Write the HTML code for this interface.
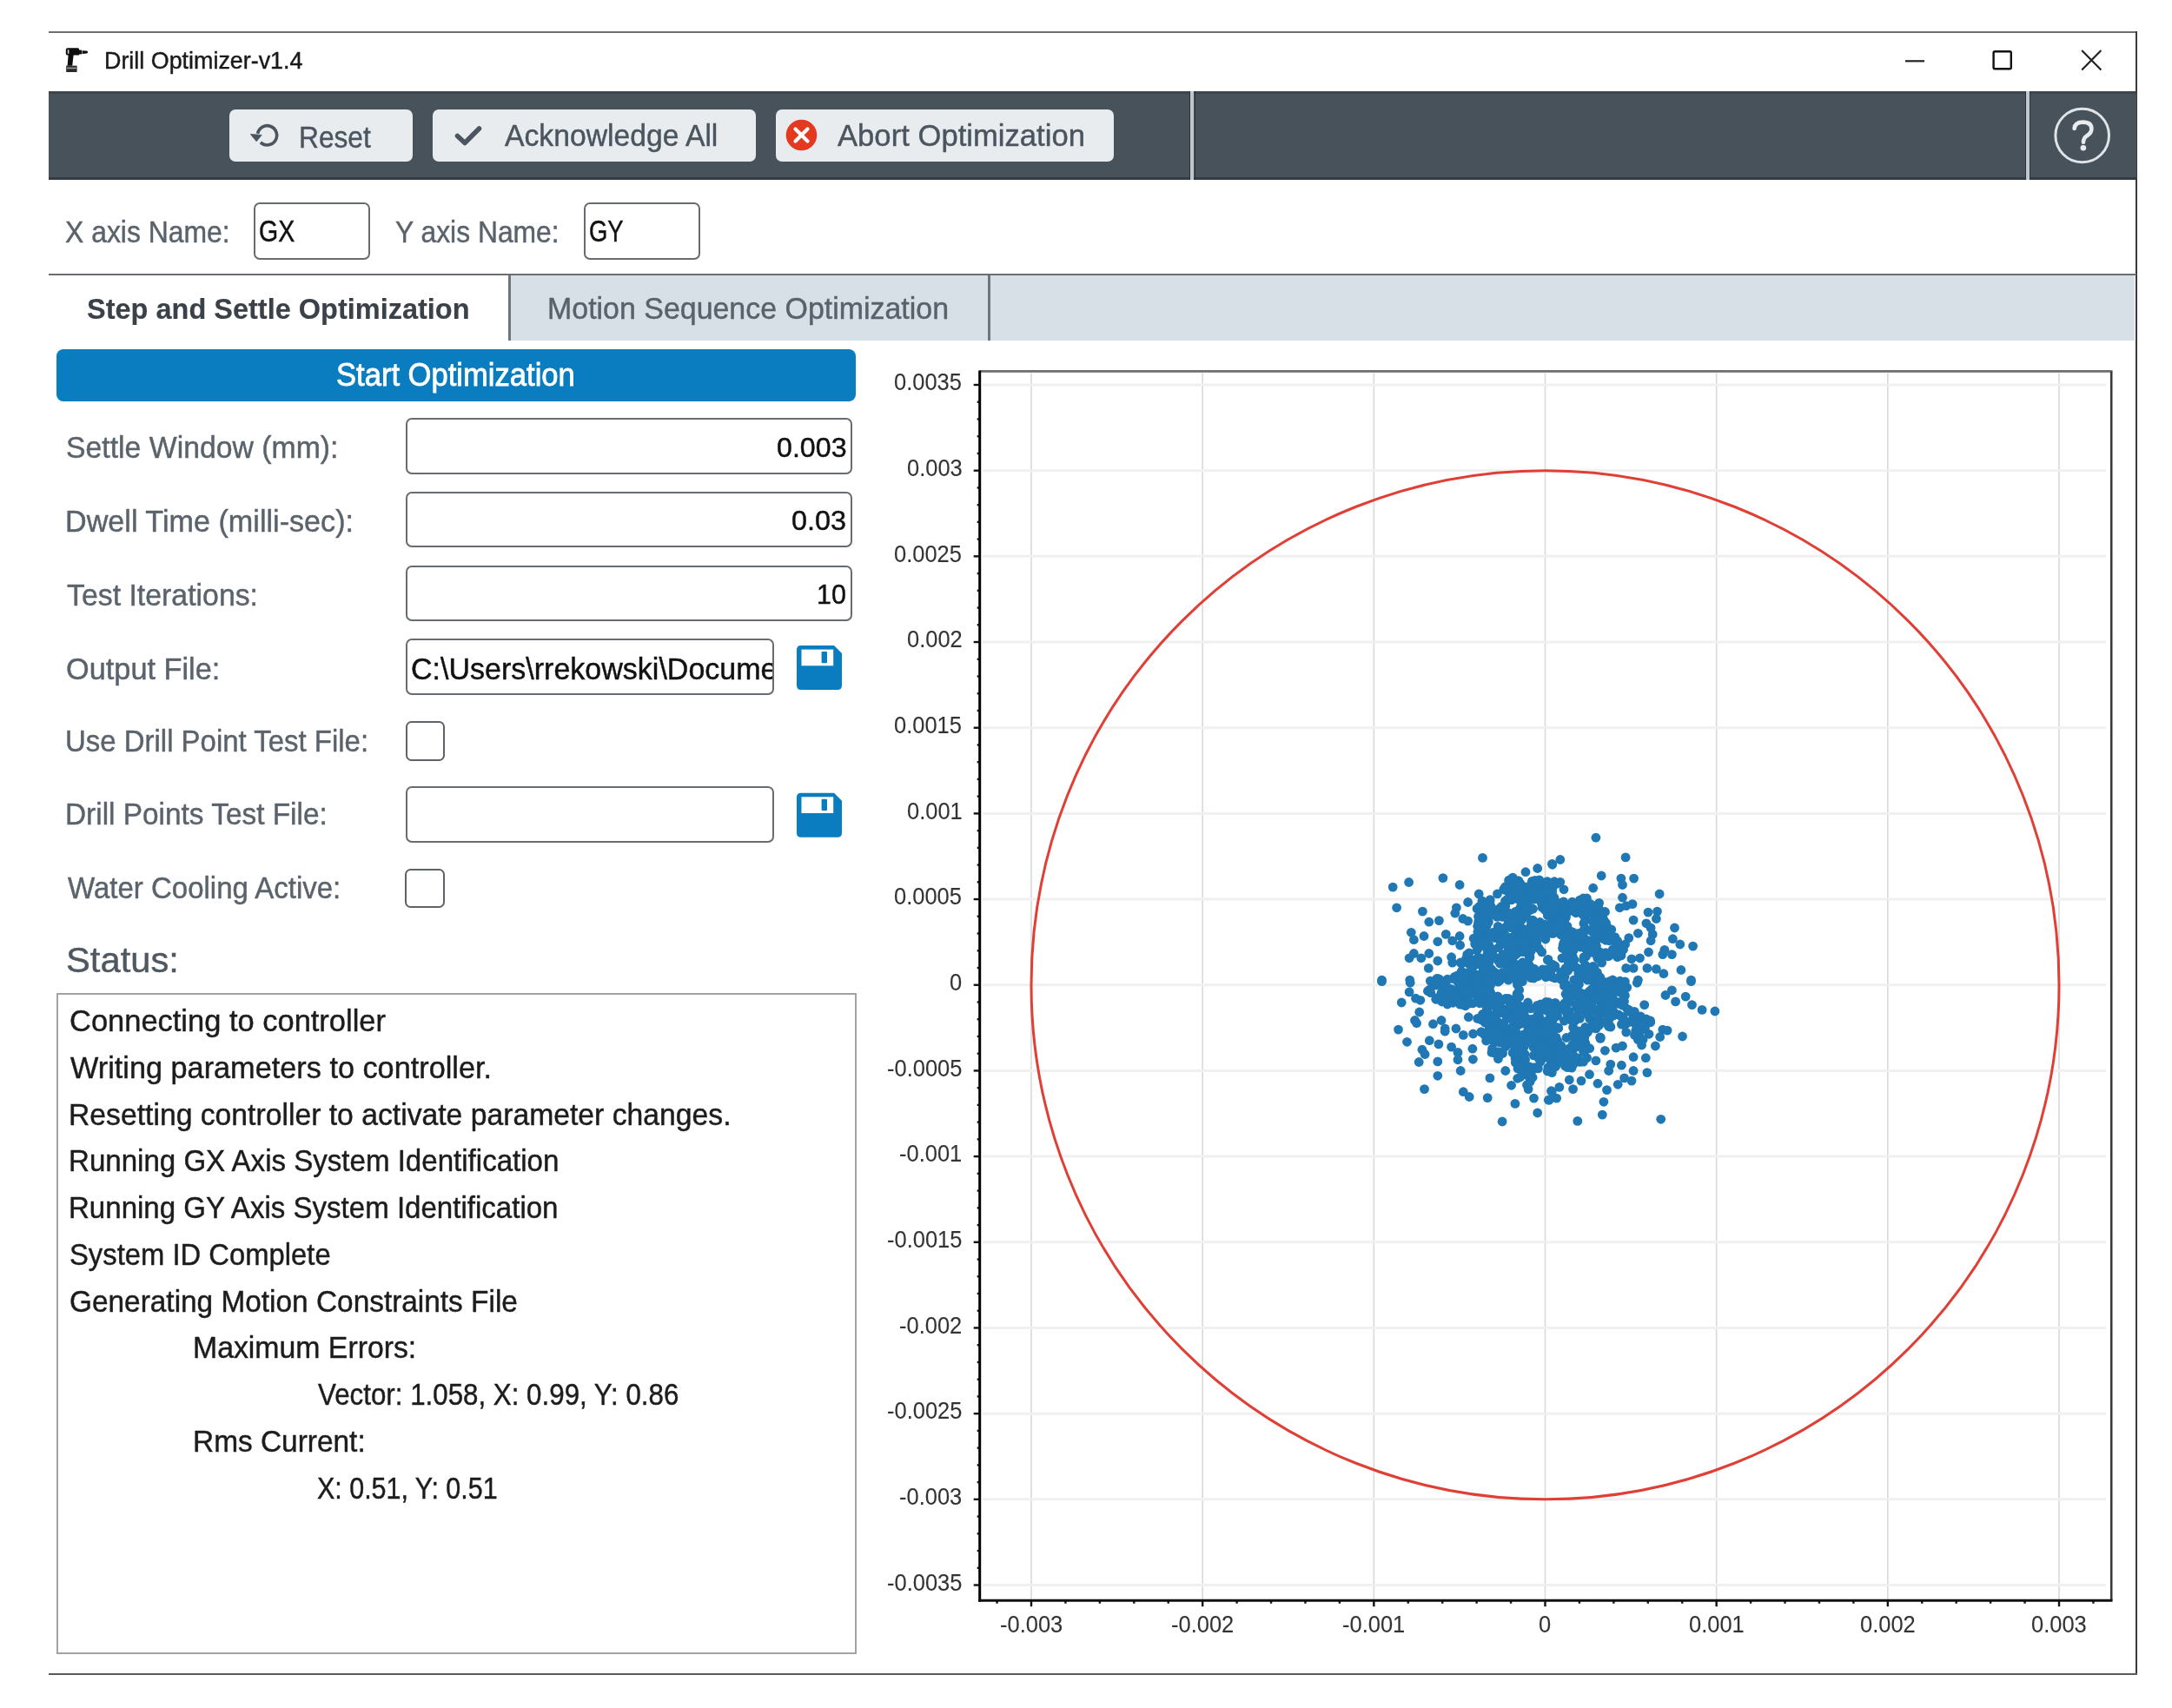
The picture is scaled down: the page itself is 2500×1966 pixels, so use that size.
<!DOCTYPE html><html><head><meta charset="utf-8"><style>
html,body{margin:0;padding:0}
body{width:2500px;height:1966px;background:#fff;position:relative;overflow:hidden;font-family:"Liberation Sans",sans-serif}
.a{position:absolute}
.t{position:absolute;white-space:pre;transform-origin:0 0;line-height:1;-webkit-text-stroke:0.45px currentColor}
svg{position:absolute;left:0;top:0}
#wrap{position:absolute;left:0;top:0;width:2500px;height:1966px;overflow:hidden;filter:blur(0.5px)}
</style></head><body><div id="wrap">
<div class="a" style="left:56.00px;top:36.00px;width:2404.00px;height:2.00px;background:#707070;"></div>
<div class="a" style="left:2458.30px;top:36.00px;width:2.00px;height:1892.00px;background:#3a3a3a;"></div>
<div class="a" style="left:56.00px;top:1926.20px;width:2404.00px;height:2.20px;background:#5a5a5a;"></div>
<svg width="2500" height="120" viewBox="0 0 2500 120" style="left:0;top:0">
<path d="M75.8 57.5 Q75.8 55.2 78 55.2 L89.5 55.2 Q91.2 55.2 91.2 57 L91.2 63.6 L84.6 63.6 L83.2 75.8 L77.6 75.8 L78.6 63.6 L78 63.6 Q75.8 63.6 75.8 61.4 Z" fill="#0d0d0d"/>
<rect x="77.8" y="57.2" width="1.6" height="4.6" fill="#d8d8d8"/>
<rect x="91" y="57.6" width="3" height="4.8" fill="#111"/>
<path d="M94.5 58.2 L100 58.6 Q102.4 60 100 61.6 L94.5 62 Z" fill="#111"/>
<rect x="76.2" y="75.6" width="12.4" height="7.4" fill="#2a2a2a"/>
<rect x="77" y="77.6" width="10.8" height="1.6" fill="#9a9a9a"/>
<line x1="2193" y1="70.3" x2="2215" y2="70.3" stroke="#222" stroke-width="2.2"/>
<rect x="2294.6" y="59.3" width="20.2" height="20" rx="1.5" fill="none" stroke="#111" stroke-width="2.4"/>
<path d="M2396.2 58 L2418.4 80.4 M2418.4 58 L2396.2 80.4" stroke="#222" stroke-width="2.2"/>
</svg>
<div class="t" style="left:119.65px;top:56.12px;font-size:27.97px;color:#1a1a1a;transform:scaleX(0.9609);">Drill Optimizer-v1.4</div>
<div class="a" style="left:56.00px;top:104.70px;width:2403.00px;height:102.10px;background:#48525b;"></div>
<div class="a" style="left:56.00px;top:104.70px;width:2403.00px;height:2.90px;background:#3e464e;"></div>
<div class="a" style="left:56.00px;top:204.00px;width:2403.00px;height:2.80px;background:#333b43;"></div>
<div class="a" style="left:1369.20px;top:104.70px;width:1.20px;height:102.10px;background:#2c333a;"></div>
<div class="a" style="left:1370.40px;top:104.70px;width:4.10px;height:102.10px;background:#c0c8ce;"></div>
<div class="a" style="left:1374.50px;top:104.70px;width:1.20px;height:102.10px;background:#2c333a;"></div>
<div class="a" style="left:2331.00px;top:104.70px;width:1.20px;height:102.10px;background:#2c333a;"></div>
<div class="a" style="left:2332.20px;top:104.70px;width:4.10px;height:102.10px;background:#c0c8ce;"></div>
<div class="a" style="left:2336.30px;top:104.70px;width:1.20px;height:102.10px;background:#2c333a;"></div>
<div class="a" style="left:263.60px;top:126.00px;width:211.40px;height:60.30px;background:#e9ecef;border-radius:7px;"></div>
<div class="a" style="left:498.10px;top:126.00px;width:371.80px;height:60.30px;background:#e9ecef;border-radius:7px;"></div>
<div class="a" style="left:893.20px;top:126.00px;width:388.90px;height:60.30px;background:#e9ecef;border-radius:7px;"></div>
<div class="t" style="left:344.47px;top:139.77px;font-size:35.22px;color:#4a5560;transform:scaleX(0.8996);">Reset</div>
<div class="t" style="left:581.20px;top:139.27px;font-size:35.80px;color:#4a5560;transform:scaleX(0.9412);">Acknowledge All</div>
<div class="t" style="left:964.00px;top:139.27px;font-size:35.80px;color:#4a5560;transform:scaleX(0.9678);">Abort Optimization</div>
<svg width="2500" height="220" viewBox="0 0 2500 220" style="left:0;top:0">
<path d="M 296.6 153.8 A 11.1 11.1 0 1 1 299.9 163.9" fill="none" stroke="#4a5560" stroke-width="3.6"/>
<path d="M 288.3 154.4 L 301.2 155.4 L 295.2 162.8 Z" fill="#4a5560" stroke="#4a5560" stroke-width="0.8" stroke-linejoin="round"/>
<path d="M 526.5 156.5 L 535 164.5 L 551.5 148" fill="none" stroke="#4a5560" stroke-width="5.5" stroke-linecap="round" stroke-linejoin="round"/>
<circle cx="922.5" cy="155.5" r="17.8" fill="#e5391f"/>
<path d="M 915.5 148.5 L 929.5 162.5 M 929.5 148.5 L 915.5 162.5" stroke="#fff" stroke-width="4.2" stroke-linecap="round"/>
<circle cx="2396.7" cy="156" r="30.8" fill="none" stroke="#dfe4e8" stroke-width="3"/>
</svg>
<svg width="2500" height="220" viewBox="0 0 2500 220" style="left:0;top:0">
<path d="M 2387.6 148 Q 2388.2 140.6 2397.6 140.6 Q 2407.4 140.6 2407.4 148.4 Q 2407.4 152.8 2402 156.4 Q 2398 159 2398 163.8" fill="none" stroke="#e8ecef" stroke-width="4.6" stroke-linecap="round"/>
<circle cx="2397.9" cy="170.3" r="3.3" fill="#e8ecef"/>
</svg>
<div class="t" style="left:75.40px;top:248.84px;font-size:35.36px;color:#5a636c;transform:scaleX(0.9022);">X axis Name:</div>
<div class="t" style="left:455.40px;top:248.84px;font-size:35.36px;color:#5a636c;transform:scaleX(0.9000);">Y axis Name:</div>
<div class="a" style="left:292.40px;top:232.50px;width:133.70px;height:66.30px;border:2.5px solid #676c71;box-sizing:border-box;border-radius:7px;"></div>
<div class="a" style="left:672.00px;top:232.50px;width:133.60px;height:66.30px;border:2.5px solid #676c71;box-sizing:border-box;border-radius:7px;"></div>
<div class="t" style="left:298.37px;top:249.43px;font-size:34.78px;color:#111;transform:scaleX(0.8196);">GX</div>
<div class="t" style="left:678.03px;top:249.43px;font-size:34.78px;color:#111;transform:scaleX(0.7904);">GY</div>
<div class="a" style="left:56.00px;top:314.50px;width:2403.00px;height:2.30px;background:#6a6e72;"></div>
<div class="a" style="left:586.00px;top:316.80px;width:1871.00px;height:75.70px;background:#d7dfe7;"></div>
<div class="a" style="left:585.00px;top:316.80px;width:2.50px;height:75.70px;background:#6f757a;"></div>
<div class="a" style="left:1137.00px;top:316.80px;width:2.50px;height:75.70px;background:#6f757a;"></div>
<div class="t" style="left:100.22px;top:338.99px;font-size:33.19px;color:#3a4148;font-weight:700;transform:scaleX(0.9797);-webkit-text-stroke:0.15px currentColor;">Step and Settle Optimization</div>
<div class="t" style="left:629.79px;top:337.57px;font-size:35.80px;color:#59626b;transform:scaleX(0.9478);">Motion Sequence Optimization</div>
<div class="a" style="left:64.50px;top:402.40px;width:920.30px;height:59.40px;background:#0a7dc0;border-radius:8px;"></div>
<div class="t" style="left:387.44px;top:414.20px;font-size:36.23px;color:#ffffff;transform:scaleX(0.9546);-webkit-text-stroke:0.8px currentColor;">Start Optimization</div>
<div class="t" style="left:76.28px;top:497.14px;font-size:35.36px;color:#5a636c;transform:scaleX(0.9554);">Settle Window (mm):</div>
<div class="t" style="left:75.07px;top:581.64px;font-size:35.36px;color:#5a636c;transform:scaleX(0.9659);">Dwell Time (milli-sec):</div>
<div class="t" style="left:77.12px;top:666.74px;font-size:35.36px;color:#5a636c;transform:scaleX(0.9568);">Test Iterations:</div>
<div class="t" style="left:76.26px;top:751.84px;font-size:35.36px;color:#5a636c;transform:scaleX(0.9704);">Output File:</div>
<div class="t" style="left:75.33px;top:834.94px;font-size:35.36px;color:#5a636c;transform:scaleX(0.9316);">Use Drill Point Test File:</div>
<div class="t" style="left:75.13px;top:919.34px;font-size:35.36px;color:#5a636c;transform:scaleX(0.9442);">Drill Points Test File:</div>
<div class="t" style="left:77.63px;top:1003.74px;font-size:35.36px;color:#5a636c;transform:scaleX(0.9334);">Water Cooling Active:</div>
<div class="a" style="left:467.20px;top:481.00px;width:513.90px;height:64.50px;border:2.5px solid #676c71;box-sizing:border-box;border-radius:7px;"></div>
<div class="a" style="left:467.20px;top:566.00px;width:513.90px;height:64.40px;border:2.5px solid #676c71;box-sizing:border-box;border-radius:7px;"></div>
<div class="a" style="left:467.20px;top:650.90px;width:513.90px;height:64.40px;border:2.5px solid #676c71;box-sizing:border-box;border-radius:7px;"></div>
<div class="a" style="left:466.80px;top:735.10px;width:424.20px;height:65.00px;border:2.5px solid #676c71;box-sizing:border-box;border-radius:7px;"></div>
<div class="a" style="left:466.80px;top:905.20px;width:424.20px;height:65.00px;border:2.5px solid #676c71;box-sizing:border-box;border-radius:7px;"></div>
<div class="a" style="left:466.50px;top:830.00px;width:45.20px;height:46.00px;border:2.8px solid #5f6367;box-sizing:border-box;border-radius:6.5px;"></div>
<div class="a" style="left:466.30px;top:999.70px;width:45.50px;height:45.50px;border:2.8px solid #5f6367;box-sizing:border-box;border-radius:6.5px;"></div>
<div class="t" style="left:894.01px;top:499.90px;font-size:31.88px;color:#111;transform:scaleX(1.0096);">0.003</div>
<div class="t" style="left:911.40px;top:584.20px;font-size:31.88px;color:#111;transform:scaleX(1.0174);">0.03</div>
<div class="t" style="left:940.41px;top:668.90px;font-size:31.88px;color:#111;transform:scaleX(0.9566);">10</div>
<div class="a" style="left:469px;top:737px;width:420px;height:61px;overflow:hidden">
<div class="t" style="left:3.90px;top:15.59px;font-size:34.48px;color:#111;transform:scaleX(0.9869);">C:\Users\rrekowski\Documents</div>
</div>
<svg width="2500" height="1000" viewBox="0 0 2500 1000" style="left:0;top:0"><g transform="translate(917,743.1)"><path d="M0 5 Q0 0 5 0 L43 0 L52 9 L52 46 Q52 51 47 51 L5 51 Q0 51 0 46 Z" fill="#0a7dc0"/>
<rect x="5.5" y="4.5" width="36.7" height="18.7" fill="#fff"/><rect x="28.6" y="7" width="6.4" height="13.1" rx="1" fill="#0a7dc0"/></g><g transform="translate(917,912.8)"><path d="M0 5 Q0 0 5 0 L43 0 L52 9 L52 46 Q52 51 47 51 L5 51 Q0 51 0 46 Z" fill="#0a7dc0"/>
<rect x="5.5" y="4.5" width="36.7" height="18.7" fill="#fff"/><rect x="28.6" y="7" width="6.4" height="13.1" rx="1" fill="#0a7dc0"/></g></svg>
<div class="t" style="left:75.82px;top:1084.74px;font-size:41.01px;color:#4f5860;transform:scaleX(1.0179);">Status:</div>
<div class="a" style="left:65.00px;top:1143.00px;width:920.50px;height:760.50px;border:2px solid #a3a3a3;box-sizing:border-box;"></div>
<div class="t" style="left:79.58px;top:1157.24px;font-size:35.36px;color:#1c1c1c;transform:scaleX(0.9746);">Connecting to controller</div>
<div class="t" style="left:81.13px;top:1210.99px;font-size:35.36px;color:#1c1c1c;transform:scaleX(0.9692);">Writing parameters to controller.</div>
<div class="t" style="left:78.60px;top:1264.74px;font-size:35.36px;color:#1c1c1c;transform:scaleX(0.9532);">Resetting controller to activate parameter changes.</div>
<div class="t" style="left:78.65px;top:1318.49px;font-size:35.36px;color:#1c1c1c;transform:scaleX(0.9354);">Running GX Axis System Identification</div>
<div class="t" style="left:78.66px;top:1372.24px;font-size:35.36px;color:#1c1c1c;transform:scaleX(0.9349);">Running GY Axis System Identification</div>
<div class="t" style="left:79.82px;top:1425.99px;font-size:35.36px;color:#1c1c1c;transform:scaleX(0.9272);">System ID Complete</div>
<div class="t" style="left:79.63px;top:1479.74px;font-size:35.36px;color:#1c1c1c;transform:scaleX(0.9442);">Generating Motion Constraints File</div>
<div class="t" style="left:221.80px;top:1533.49px;font-size:35.36px;color:#1c1c1c;transform:scaleX(0.9559);">Maximum Errors:</div>
<div class="t" style="left:365.84px;top:1587.24px;font-size:35.36px;color:#1c1c1c;transform:scaleX(0.8852);">Vector: 1.058, X: 0.99, Y: 0.86</div>
<div class="t" style="left:221.83px;top:1640.99px;font-size:35.36px;color:#1c1c1c;transform:scaleX(0.9451);">Rms Current:</div>
<div class="t" style="left:365.24px;top:1694.74px;font-size:35.36px;color:#1c1c1c;transform:scaleX(0.8609);">X: 0.51, Y: 0.51</div>
<svg width="2500" height="1966" viewBox="0 0 2500 1966" style="left:0;top:0">
<line x1="1186.99" y1="429.40" x2="1186.99" y2="1841.20" stroke="#d9d9d9" stroke-width="1.6"/>
<line x1="1384.16" y1="429.40" x2="1384.16" y2="1841.20" stroke="#d9d9d9" stroke-width="1.6"/>
<line x1="1581.33" y1="429.40" x2="1581.33" y2="1841.20" stroke="#d9d9d9" stroke-width="1.6"/>
<line x1="1778.50" y1="429.40" x2="1778.50" y2="1841.20" stroke="#d9d9d9" stroke-width="1.6"/>
<line x1="1975.67" y1="429.40" x2="1975.67" y2="1841.20" stroke="#d9d9d9" stroke-width="1.6"/>
<line x1="2172.84" y1="429.40" x2="2172.84" y2="1841.20" stroke="#d9d9d9" stroke-width="1.6"/>
<line x1="2370.01" y1="429.40" x2="2370.01" y2="1841.20" stroke="#d9d9d9" stroke-width="1.6"/>
<line x1="1130.70" y1="1824.51" x2="2424.20" y2="1824.51" stroke="#f0f0f0" stroke-width="3"/>
<line x1="1130.70" y1="1725.83" x2="2424.20" y2="1725.83" stroke="#f0f0f0" stroke-width="3"/>
<line x1="1130.70" y1="1627.15" x2="2424.20" y2="1627.15" stroke="#f0f0f0" stroke-width="3"/>
<line x1="1130.70" y1="1528.47" x2="2424.20" y2="1528.47" stroke="#f0f0f0" stroke-width="3"/>
<line x1="1130.70" y1="1429.79" x2="2424.20" y2="1429.79" stroke="#f0f0f0" stroke-width="3"/>
<line x1="1130.70" y1="1331.11" x2="2424.20" y2="1331.11" stroke="#f0f0f0" stroke-width="3"/>
<line x1="1130.70" y1="1232.43" x2="2424.20" y2="1232.43" stroke="#f0f0f0" stroke-width="3"/>
<line x1="1130.70" y1="1133.75" x2="2424.20" y2="1133.75" stroke="#f0f0f0" stroke-width="3"/>
<line x1="1130.70" y1="1035.07" x2="2424.20" y2="1035.07" stroke="#f0f0f0" stroke-width="3"/>
<line x1="1130.70" y1="936.39" x2="2424.20" y2="936.39" stroke="#f0f0f0" stroke-width="3"/>
<line x1="1130.70" y1="837.71" x2="2424.20" y2="837.71" stroke="#f0f0f0" stroke-width="3"/>
<line x1="1130.70" y1="739.03" x2="2424.20" y2="739.03" stroke="#f0f0f0" stroke-width="3"/>
<line x1="1130.70" y1="640.35" x2="2424.20" y2="640.35" stroke="#f0f0f0" stroke-width="3"/>
<line x1="1130.70" y1="541.67" x2="2424.20" y2="541.67" stroke="#f0f0f0" stroke-width="3"/>
<line x1="1130.70" y1="442.99" x2="2424.20" y2="442.99" stroke="#f0f0f0" stroke-width="3"/>
<line x1="1127.7" y1="427.4" x2="2431.3999999999996" y2="427.4" stroke="#6e6e6e" stroke-width="2.6"/>
<line x1="2430.2" y1="427.4" x2="2430.2" y2="1842.2" stroke="#3a3a3a" stroke-width="2.6"/>
<ellipse cx="1778.5" cy="1133.75" rx="591.51" ry="592.08" fill="none" stroke="#e03f36" stroke-width="3"/>
<g fill="#1f77b4"><circle cx="1706.5" cy="987.4" r="5.4"/><circle cx="1660.9" cy="1010.6" r="5.4"/><circle cx="1621.6" cy="1015.5" r="5.4"/><circle cx="1603.2" cy="1021.1" r="5.4"/><circle cx="1680.1" cy="1018.5" r="5.4"/><circle cx="1702.2" cy="1029.0" r="5.4"/><circle cx="1689.6" cy="1038.5" r="5.4"/><circle cx="1607.6" cy="1044.8" r="5.4"/><circle cx="1637.4" cy="1049.1" r="5.4"/><circle cx="1644.8" cy="1061.2" r="5.4"/><circle cx="1656.4" cy="1059.6" r="5.4"/><circle cx="1676.4" cy="1044.8" r="5.4"/><circle cx="1674.8" cy="1051.2" r="5.4"/><circle cx="1683.8" cy="1057.5" r="5.4"/><circle cx="1689.6" cy="1060.1" r="5.4"/><circle cx="1701.2" cy="1064.9" r="5.4"/><circle cx="1706.5" cy="1070.1" r="5.4"/><circle cx="1624.3" cy="1073.3" r="5.4"/><circle cx="1627.4" cy="1081.7" r="5.4"/><circle cx="1639.0" cy="1077.5" r="5.4"/><circle cx="1654.8" cy="1083.8" r="5.4"/><circle cx="1664.3" cy="1075.4" r="5.4"/><circle cx="1671.7" cy="1082.8" r="5.4"/><circle cx="1680.1" cy="1077.5" r="5.4"/><circle cx="1680.6" cy="1088.0" r="5.4"/><circle cx="1622.1" cy="1102.8" r="5.4"/><circle cx="1627.4" cy="1097.5" r="5.4"/><circle cx="1635.8" cy="1102.8" r="5.4"/><circle cx="1644.8" cy="1097.5" r="5.4"/><circle cx="1654.8" cy="1106.0" r="5.4"/><circle cx="1644.3" cy="1114.4" r="5.4"/><circle cx="1670.6" cy="1101.7" r="5.4"/><circle cx="1671.7" cy="1108.1" r="5.4"/><circle cx="1590.5" cy="1128.1" r="5.4"/><circle cx="1622.7" cy="1128.1" r="5.4"/><circle cx="1741.2" cy="1010.1" r="5.4"/><circle cx="1744.4" cy="1019.5" r="5.4"/><circle cx="1738.1" cy="1015.3" r="5.4"/><circle cx="1756.0" cy="1003.7" r="5.4"/><circle cx="1769.7" cy="999.5" r="5.4"/><circle cx="1763.4" cy="1014.3" r="5.4"/><circle cx="1786.5" cy="994.3" r="5.4"/><circle cx="1730.7" cy="1023.8" r="5.4"/><circle cx="1732.8" cy="1042.7" r="5.4"/><circle cx="1729.6" cy="1055.4" r="5.4"/><circle cx="1836.9" cy="964.2" r="5.4"/><circle cx="1871.1" cy="986.9" r="5.4"/><circle cx="1795.8" cy="989.5" r="5.4"/><circle cx="1786.8" cy="995.3" r="5.4"/><circle cx="1843.2" cy="1008.0" r="5.4"/><circle cx="1865.9" cy="1011.1" r="5.4"/><circle cx="1867.5" cy="1018.5" r="5.4"/><circle cx="1880.6" cy="1011.1" r="5.4"/><circle cx="1833.7" cy="1022.2" r="5.4"/><circle cx="1795.8" cy="1015.3" r="5.4"/><circle cx="1800.0" cy="1023.8" r="5.4"/><circle cx="1791.6" cy="1017.4" r="5.4"/><circle cx="1910.1" cy="1029.0" r="5.4"/><circle cx="1867.5" cy="1033.2" r="5.4"/><circle cx="1879.0" cy="1040.6" r="5.4"/><circle cx="1864.3" cy="1044.8" r="5.4"/><circle cx="1871.7" cy="1042.7" r="5.4"/><circle cx="1897.0" cy="1050.1" r="5.4"/><circle cx="1907.5" cy="1049.1" r="5.4"/><circle cx="1906.4" cy="1057.5" r="5.4"/><circle cx="1880.1" cy="1059.1" r="5.4"/><circle cx="1894.9" cy="1062.8" r="5.4"/><circle cx="1900.1" cy="1068.0" r="5.4"/><circle cx="1902.2" cy="1075.4" r="5.4"/><circle cx="1900.1" cy="1082.8" r="5.4"/><circle cx="1927.5" cy="1068.0" r="5.4"/><circle cx="1885.4" cy="1074.3" r="5.4"/><circle cx="1874.8" cy="1079.6" r="5.4"/><circle cx="1870.6" cy="1087.0" r="5.4"/><circle cx="1868.5" cy="1093.3" r="5.4"/><circle cx="1925.4" cy="1080.7" r="5.4"/><circle cx="1933.8" cy="1087.0" r="5.4"/><circle cx="1948.6" cy="1089.1" r="5.4"/><circle cx="1897.5" cy="1096.0" r="5.4"/><circle cx="1915.9" cy="1093.3" r="5.4"/><circle cx="1924.4" cy="1098.6" r="5.4"/><circle cx="1913.8" cy="1098.6" r="5.4"/><circle cx="1934.9" cy="1116.5" r="5.4"/><circle cx="1895.9" cy="1114.4" r="5.4"/><circle cx="1906.4" cy="1115.4" r="5.4"/><circle cx="1914.9" cy="1120.7" r="5.4"/><circle cx="1946.5" cy="1128.1" r="5.4"/><circle cx="1885.4" cy="1128.1" r="5.4"/><circle cx="1887.5" cy="1102.8" r="5.4"/><circle cx="1878.0" cy="1103.8" r="5.4"/><circle cx="1871.7" cy="1114.4" r="5.4"/><circle cx="1880.1" cy="1114.4" r="5.4"/><circle cx="1797.9" cy="1102.8" r="5.4"/><circle cx="1786.3" cy="1112.3" r="5.4"/><circle cx="1782.1" cy="1115.4" r="5.4"/><circle cx="1802.1" cy="1114.4" r="5.4"/><circle cx="1801.1" cy="1123.9" r="5.4"/><circle cx="1590.5" cy="1129.7" r="5.4"/><circle cx="1623.2" cy="1131.3" r="5.4"/><circle cx="1622.1" cy="1141.9" r="5.4"/><circle cx="1629.5" cy="1149.2" r="5.4"/><circle cx="1634.8" cy="1151.3" r="5.4"/><circle cx="1645.3" cy="1139.2" r="5.4"/><circle cx="1652.7" cy="1150.3" r="5.4"/><circle cx="1613.2" cy="1154.0" r="5.4"/><circle cx="1633.7" cy="1165.0" r="5.4"/><circle cx="1628.5" cy="1174.5" r="5.4"/><circle cx="1630.6" cy="1177.7" r="5.4"/><circle cx="1609.5" cy="1185.1" r="5.4"/><circle cx="1649.5" cy="1178.7" r="5.4"/><circle cx="1659.0" cy="1174.5" r="5.4"/><circle cx="1663.2" cy="1184.0" r="5.4"/><circle cx="1663.2" cy="1187.2" r="5.4"/><circle cx="1675.9" cy="1184.0" r="5.4"/><circle cx="1684.3" cy="1191.4" r="5.4"/><circle cx="1619.5" cy="1199.3" r="5.4"/><circle cx="1645.3" cy="1197.7" r="5.4"/><circle cx="1655.9" cy="1201.9" r="5.4"/><circle cx="1636.9" cy="1208.2" r="5.4"/><circle cx="1640.1" cy="1213.5" r="5.4"/><circle cx="1670.6" cy="1205.1" r="5.4"/><circle cx="1678.0" cy="1211.4" r="5.4"/><circle cx="1678.0" cy="1219.8" r="5.4"/><circle cx="1681.2" cy="1232.5" r="5.4"/><circle cx="1694.9" cy="1207.2" r="5.4"/><circle cx="1695.4" cy="1219.3" r="5.4"/><circle cx="1633.2" cy="1222.5" r="5.4"/><circle cx="1654.8" cy="1221.9" r="5.4"/><circle cx="1654.8" cy="1238.3" r="5.4"/><circle cx="1714.9" cy="1240.9" r="5.4"/><circle cx="1732.8" cy="1232.5" r="5.4"/><circle cx="1639.5" cy="1253.6" r="5.4"/><circle cx="1684.3" cy="1256.7" r="5.4"/><circle cx="1691.2" cy="1262.5" r="5.4"/><circle cx="1712.2" cy="1263.6" r="5.4"/><circle cx="1739.6" cy="1249.3" r="5.4"/><circle cx="1743.9" cy="1270.4" r="5.4"/><circle cx="1729.1" cy="1291.0" r="5.4"/><circle cx="1769.7" cy="1281.0" r="5.4"/><circle cx="1765.5" cy="1264.1" r="5.4"/><circle cx="1759.1" cy="1253.6" r="5.4"/><circle cx="1782.3" cy="1266.2" r="5.4"/><circle cx="1785.5" cy="1255.7" r="5.4"/><circle cx="1717.0" cy="1211.4" r="5.4"/><circle cx="1724.4" cy="1218.8" r="5.4"/><circle cx="1784.4" cy="1210.4" r="5.4"/><circle cx="1884.3" cy="1131.3" r="5.4"/><circle cx="1946.5" cy="1129.7" r="5.4"/><circle cx="1872.7" cy="1136.6" r="5.4"/><circle cx="1917.0" cy="1145.5" r="5.4"/><circle cx="1924.4" cy="1139.8" r="5.4"/><circle cx="1928.6" cy="1152.9" r="5.4"/><circle cx="1940.2" cy="1147.1" r="5.4"/><circle cx="1947.5" cy="1156.6" r="5.4"/><circle cx="1959.1" cy="1162.4" r="5.4"/><circle cx="1973.9" cy="1164.0" r="5.4"/><circle cx="1892.7" cy="1156.6" r="5.4"/><circle cx="1936.5" cy="1193.0" r="5.4"/><circle cx="1913.8" cy="1185.1" r="5.4"/><circle cx="1919.1" cy="1186.1" r="5.4"/><circle cx="1910.7" cy="1193.5" r="5.4"/><circle cx="1899.1" cy="1175.6" r="5.4"/><circle cx="1898.0" cy="1190.3" r="5.4"/><circle cx="1889.6" cy="1203.0" r="5.4"/><circle cx="1905.4" cy="1204.0" r="5.4"/><circle cx="1880.1" cy="1170.3" r="5.4"/><circle cx="1885.4" cy="1184.0" r="5.4"/><circle cx="1885.4" cy="1196.7" r="5.4"/><circle cx="1867.5" cy="1204.0" r="5.4"/><circle cx="1860.1" cy="1206.1" r="5.4"/><circle cx="1847.4" cy="1209.3" r="5.4"/><circle cx="1880.1" cy="1216.7" r="5.4"/><circle cx="1880.1" cy="1232.5" r="5.4"/><circle cx="1878.0" cy="1244.1" r="5.4"/><circle cx="1894.3" cy="1217.7" r="5.4"/><circle cx="1895.9" cy="1234.6" r="5.4"/><circle cx="1836.9" cy="1220.9" r="5.4"/><circle cx="1829.5" cy="1236.7" r="5.4"/><circle cx="1820.0" cy="1244.1" r="5.4"/><circle cx="1839.0" cy="1247.2" r="5.4"/><circle cx="1849.5" cy="1254.6" r="5.4"/><circle cx="1862.2" cy="1248.3" r="5.4"/><circle cx="1869.6" cy="1240.9" r="5.4"/><circle cx="1853.8" cy="1225.1" r="5.4"/><circle cx="1851.7" cy="1232.5" r="5.4"/><circle cx="1866.4" cy="1226.2" r="5.4"/><circle cx="1810.6" cy="1253.6" r="5.4"/><circle cx="1806.3" cy="1243.0" r="5.4"/><circle cx="1794.8" cy="1251.4" r="5.4"/><circle cx="1786.3" cy="1256.7" r="5.4"/><circle cx="1791.6" cy="1264.1" r="5.4"/><circle cx="1783.2" cy="1266.2" r="5.4"/><circle cx="1845.9" cy="1268.3" r="5.4"/><circle cx="1844.3" cy="1283.1" r="5.4"/><circle cx="1815.8" cy="1290.4" r="5.4"/><circle cx="1911.7" cy="1288.3" r="5.4"/><circle cx="1784.2" cy="1210.4" r="5.4"/><circle cx="1788.4" cy="1226.2" r="5.4"/><circle cx="1786.3" cy="1234.6" r="5.4"/><circle cx="1736.6" cy="1098.5" r="5.4"/><circle cx="1761.0" cy="1123.0" r="5.4"/><circle cx="1753.2" cy="1120.5" r="5.4"/><circle cx="1776.0" cy="1021.8" r="5.4"/><circle cx="1714.9" cy="1038.1" r="5.4"/><circle cx="1725.4" cy="1078.0" r="5.4"/><circle cx="1688.0" cy="1119.8" r="5.4"/><circle cx="1756.9" cy="1027.5" r="5.4"/><circle cx="1761.3" cy="1024.9" r="5.4"/><circle cx="1735.9" cy="1023.5" r="5.4"/><circle cx="1787.5" cy="1114.4" r="5.4"/><circle cx="1689.4" cy="1125.3" r="5.4"/><circle cx="1724.8" cy="1090.7" r="5.4"/><circle cx="1677.5" cy="1122.8" r="5.4"/><circle cx="1746.2" cy="1125.9" r="5.4"/><circle cx="1775.0" cy="1044.5" r="5.4"/><circle cx="1764.3" cy="1066.7" r="5.4"/><circle cx="1748.2" cy="1015.0" r="5.4"/><circle cx="1754.6" cy="1111.1" r="5.4"/><circle cx="1700.3" cy="1078.6" r="5.4"/><circle cx="1674.1" cy="1124.5" r="5.4"/><circle cx="1780.0" cy="1122.9" r="5.4"/><circle cx="1722.7" cy="1102.6" r="5.4"/><circle cx="1761.3" cy="1112.9" r="5.4"/><circle cx="1734.9" cy="1120.0" r="5.4"/><circle cx="1696.6" cy="1120.8" r="5.4"/><circle cx="1725.6" cy="1046.1" r="5.4"/><circle cx="1746.0" cy="1129.6" r="5.4"/><circle cx="1788.1" cy="1073.1" r="5.4"/><circle cx="1705.9" cy="1037.0" r="5.4"/><circle cx="1732.5" cy="1108.8" r="5.4"/><circle cx="1713.0" cy="1059.5" r="5.4"/><circle cx="1767.1" cy="1023.9" r="5.4"/><circle cx="1752.0" cy="1123.9" r="5.4"/><circle cx="1737.7" cy="1104.1" r="5.4"/><circle cx="1789.9" cy="1112.0" r="5.4"/><circle cx="1786.6" cy="1063.3" r="5.4"/><circle cx="1717.6" cy="1097.0" r="5.4"/><circle cx="1716.3" cy="1043.5" r="5.4"/><circle cx="1701.8" cy="1128.6" r="5.4"/><circle cx="1719.2" cy="1049.3" r="5.4"/><circle cx="1759.2" cy="1113.8" r="5.4"/><circle cx="1699.6" cy="1103.9" r="5.4"/><circle cx="1758.1" cy="1092.7" r="5.4"/><circle cx="1742.5" cy="1100.7" r="5.4"/><circle cx="1699.9" cy="1093.9" r="5.4"/><circle cx="1757.4" cy="1092.3" r="5.4"/><circle cx="1690.1" cy="1123.4" r="5.4"/><circle cx="1740.4" cy="1078.8" r="5.4"/><circle cx="1714.0" cy="1107.6" r="5.4"/><circle cx="1740.1" cy="1105.3" r="5.4"/><circle cx="1697.7" cy="1086.6" r="5.4"/><circle cx="1752.9" cy="1109.0" r="5.4"/><circle cx="1698.0" cy="1110.8" r="5.4"/><circle cx="1771.6" cy="1092.0" r="5.4"/><circle cx="1786.6" cy="1124.7" r="5.4"/><circle cx="1721.8" cy="1072.6" r="5.4"/><circle cx="1781.1" cy="1066.2" r="5.4"/><circle cx="1746.3" cy="1095.8" r="5.4"/><circle cx="1751.8" cy="1029.0" r="5.4"/><circle cx="1758.9" cy="1078.9" r="5.4"/><circle cx="1742.7" cy="1059.3" r="5.4"/><circle cx="1736.8" cy="1102.5" r="5.4"/><circle cx="1738.6" cy="1095.9" r="5.4"/><circle cx="1710.9" cy="1087.3" r="5.4"/><circle cx="1737.8" cy="1013.1" r="5.4"/><circle cx="1715.2" cy="1035.6" r="5.4"/><circle cx="1714.3" cy="1054.4" r="5.4"/><circle cx="1735.1" cy="1080.0" r="5.4"/><circle cx="1682.2" cy="1118.2" r="5.4"/><circle cx="1735.3" cy="1019.6" r="5.4"/><circle cx="1725.6" cy="1049.4" r="5.4"/><circle cx="1730.7" cy="1124.9" r="5.4"/><circle cx="1764.3" cy="1059.1" r="5.4"/><circle cx="1763.5" cy="1086.4" r="5.4"/><circle cx="1732.8" cy="1076.8" r="5.4"/><circle cx="1734.6" cy="1050.8" r="5.4"/><circle cx="1735.5" cy="1025.2" r="5.4"/><circle cx="1737.6" cy="1116.7" r="5.4"/><circle cx="1701.7" cy="1060.7" r="5.4"/><circle cx="1786.1" cy="1054.3" r="5.4"/><circle cx="1784.5" cy="1119.5" r="5.4"/><circle cx="1732.8" cy="1039.7" r="5.4"/><circle cx="1787.3" cy="1068.5" r="5.4"/><circle cx="1707.3" cy="1046.9" r="5.4"/><circle cx="1787.8" cy="1068.0" r="5.4"/><circle cx="1711.3" cy="1043.8" r="5.4"/><circle cx="1759.1" cy="1108.9" r="5.4"/><circle cx="1687.2" cy="1122.1" r="5.4"/><circle cx="1759.1" cy="1038.0" r="5.4"/><circle cx="1788.4" cy="1043.8" r="5.4"/><circle cx="1734.5" cy="1065.9" r="5.4"/><circle cx="1739.8" cy="1081.7" r="5.4"/><circle cx="1753.7" cy="1022.4" r="5.4"/><circle cx="1756.1" cy="1044.7" r="5.4"/><circle cx="1724.0" cy="1049.0" r="5.4"/><circle cx="1714.2" cy="1052.0" r="5.4"/><circle cx="1753.9" cy="1080.1" r="5.4"/><circle cx="1713.0" cy="1119.8" r="5.4"/><circle cx="1774.1" cy="1074.6" r="5.4"/><circle cx="1709.0" cy="1078.2" r="5.4"/><circle cx="1748.7" cy="1085.1" r="5.4"/><circle cx="1716.7" cy="1119.2" r="5.4"/><circle cx="1703.0" cy="1055.8" r="5.4"/><circle cx="1769.0" cy="1032.0" r="5.4"/><circle cx="1690.4" cy="1109.3" r="5.4"/><circle cx="1746.8" cy="1060.8" r="5.4"/><circle cx="1689.0" cy="1103.2" r="5.4"/><circle cx="1777.4" cy="1025.4" r="5.4"/><circle cx="1716.2" cy="1075.0" r="5.4"/><circle cx="1718.9" cy="1048.3" r="5.4"/><circle cx="1763.4" cy="1016.3" r="5.4"/><circle cx="1681.0" cy="1108.0" r="5.4"/><circle cx="1760.5" cy="1089.0" r="5.4"/><circle cx="1747.7" cy="1014.0" r="5.4"/><circle cx="1767.7" cy="1034.7" r="5.4"/><circle cx="1739.9" cy="1124.2" r="5.4"/><circle cx="1749.3" cy="1024.4" r="5.4"/><circle cx="1689.9" cy="1120.0" r="5.4"/><circle cx="1736.6" cy="1013.3" r="5.4"/><circle cx="1729.9" cy="1098.6" r="5.4"/><circle cx="1772.8" cy="1024.4" r="5.4"/><circle cx="1709.6" cy="1046.4" r="5.4"/><circle cx="1733.4" cy="1067.7" r="5.4"/><circle cx="1781.3" cy="1053.7" r="5.4"/><circle cx="1720.1" cy="1119.1" r="5.4"/><circle cx="1727.0" cy="1083.7" r="5.4"/><circle cx="1752.8" cy="1029.9" r="5.4"/><circle cx="1749.4" cy="1087.9" r="5.4"/><circle cx="1732.5" cy="1037.1" r="5.4"/><circle cx="1772.6" cy="1066.6" r="5.4"/><circle cx="1694.2" cy="1105.2" r="5.4"/><circle cx="1764.6" cy="1025.1" r="5.4"/><circle cx="1736.9" cy="1051.2" r="5.4"/><circle cx="1735.3" cy="1050.5" r="5.4"/><circle cx="1766.1" cy="1087.0" r="5.4"/><circle cx="1762.3" cy="1060.9" r="5.4"/><circle cx="1769.0" cy="1071.1" r="5.4"/><circle cx="1732.4" cy="1077.9" r="5.4"/><circle cx="1753.2" cy="1056.3" r="5.4"/><circle cx="1774.3" cy="1066.7" r="5.4"/><circle cx="1715.0" cy="1116.6" r="5.4"/><circle cx="1736.2" cy="1060.3" r="5.4"/><circle cx="1701.5" cy="1055.1" r="5.4"/><circle cx="1773.1" cy="1026.6" r="5.4"/><circle cx="1700.7" cy="1122.4" r="5.4"/><circle cx="1745.8" cy="1090.2" r="5.4"/><circle cx="1715.3" cy="1123.3" r="5.4"/><circle cx="1751.7" cy="1027.9" r="5.4"/><circle cx="1705.3" cy="1126.8" r="5.4"/><circle cx="1700.0" cy="1046.0" r="5.4"/><circle cx="1714.7" cy="1042.5" r="5.4"/><circle cx="1752.1" cy="1095.6" r="5.4"/><circle cx="1743.6" cy="1122.7" r="5.4"/><circle cx="1739.9" cy="1060.5" r="5.4"/><circle cx="1726.1" cy="1128.7" r="5.4"/><circle cx="1721.9" cy="1050.7" r="5.4"/><circle cx="1775.7" cy="1067.9" r="5.4"/><circle cx="1780.9" cy="1014.6" r="5.4"/><circle cx="1653.8" cy="1126.5" r="5.4"/><circle cx="1705.4" cy="1072.8" r="5.4"/><circle cx="1778.9" cy="1081.0" r="5.4"/><circle cx="1769.7" cy="1034.2" r="5.4"/><circle cx="1717.3" cy="1077.7" r="5.4"/><circle cx="1701.8" cy="1084.3" r="5.4"/><circle cx="1751.2" cy="1119.4" r="5.4"/><circle cx="1765.4" cy="1035.3" r="5.4"/><circle cx="1764.5" cy="1046.2" r="5.4"/><circle cx="1709.2" cy="1078.4" r="5.4"/><circle cx="1747.6" cy="1013.9" r="5.4"/><circle cx="1708.0" cy="1046.3" r="5.4"/><circle cx="1755.0" cy="1075.8" r="5.4"/><circle cx="1756.0" cy="1078.1" r="5.4"/><circle cx="1711.1" cy="1107.6" r="5.4"/><circle cx="1741.2" cy="1124.5" r="5.4"/><circle cx="1751.5" cy="1093.5" r="5.4"/><circle cx="1686.4" cy="1107.1" r="5.4"/><circle cx="1756.6" cy="1076.0" r="5.4"/><circle cx="1770.2" cy="1123.8" r="5.4"/><circle cx="1735.1" cy="1036.2" r="5.4"/><circle cx="1709.2" cy="1052.2" r="5.4"/><circle cx="1731.2" cy="1108.9" r="5.4"/><circle cx="1751.3" cy="1019.6" r="5.4"/><circle cx="1723.5" cy="1028.9" r="5.4"/><circle cx="1748.9" cy="1062.4" r="5.4"/><circle cx="1781.3" cy="1105.0" r="5.4"/><circle cx="1778.0" cy="1064.2" r="5.4"/><circle cx="1709.9" cy="1061.9" r="5.4"/><circle cx="1757.1" cy="1122.2" r="5.4"/><circle cx="1723.9" cy="1126.3" r="5.4"/><circle cx="1732.8" cy="1020.6" r="5.4"/><circle cx="1763.7" cy="1059.2" r="5.4"/><circle cx="1655.9" cy="1127.3" r="5.4"/><circle cx="1716.7" cy="1115.6" r="5.4"/><circle cx="1728.1" cy="1051.6" r="5.4"/><circle cx="1754.8" cy="1037.5" r="5.4"/><circle cx="1787.5" cy="1110.5" r="5.4"/><circle cx="1768.8" cy="1083.4" r="5.4"/><circle cx="1766.2" cy="1067.8" r="5.4"/><circle cx="1775.9" cy="1032.3" r="5.4"/><circle cx="1761.3" cy="1047.5" r="5.4"/><circle cx="1745.1" cy="1113.3" r="5.4"/><circle cx="1736.7" cy="1105.6" r="5.4"/><circle cx="1720.9" cy="1079.6" r="5.4"/><circle cx="1715.9" cy="1093.8" r="5.4"/><circle cx="1705.0" cy="1127.9" r="5.4"/><circle cx="1763.9" cy="1120.7" r="5.4"/><circle cx="1746.5" cy="1089.8" r="5.4"/><circle cx="1724.4" cy="1105.4" r="5.4"/><circle cx="1699.8" cy="1080.4" r="5.4"/><circle cx="1744.6" cy="1071.7" r="5.4"/><circle cx="1730.6" cy="1100.7" r="5.4"/><circle cx="1749.6" cy="1045.4" r="5.4"/><circle cx="1780.0" cy="1041.5" r="5.4"/><circle cx="1749.8" cy="1016.8" r="5.4"/><circle cx="1755.1" cy="1089.7" r="5.4"/><circle cx="1783.9" cy="1117.5" r="5.4"/><circle cx="1745.8" cy="1110.3" r="5.4"/><circle cx="1753.0" cy="1082.5" r="5.4"/><circle cx="1775.3" cy="1037.2" r="5.4"/><circle cx="1786.4" cy="1074.4" r="5.4"/><circle cx="1740.9" cy="1117.7" r="5.4"/><circle cx="1746.0" cy="1075.5" r="5.4"/><circle cx="1749.7" cy="1053.6" r="5.4"/><circle cx="1774.0" cy="1034.0" r="5.4"/><circle cx="1736.5" cy="1117.5" r="5.4"/><circle cx="1757.0" cy="1035.4" r="5.4"/><circle cx="1766.0" cy="1115.2" r="5.4"/><circle cx="1751.5" cy="1058.9" r="5.4"/><circle cx="1708.7" cy="1072.5" r="5.4"/><circle cx="1776.5" cy="1044.9" r="5.4"/><circle cx="1785.3" cy="1030.8" r="5.4"/><circle cx="1728.1" cy="1081.6" r="5.4"/><circle cx="1732.6" cy="1086.9" r="5.4"/><circle cx="1746.2" cy="1096.9" r="5.4"/><circle cx="1766.6" cy="1124.8" r="5.4"/><circle cx="1693.6" cy="1111.7" r="5.4"/><circle cx="1739.8" cy="1121.1" r="5.4"/><circle cx="1767.5" cy="1066.2" r="5.4"/><circle cx="1752.7" cy="1107.6" r="5.4"/><circle cx="1762.2" cy="1095.0" r="5.4"/><circle cx="1779.3" cy="1124.7" r="5.4"/><circle cx="1737.0" cy="1125.7" r="5.4"/><circle cx="1701.5" cy="1064.0" r="5.4"/><circle cx="1744.8" cy="1098.6" r="5.4"/><circle cx="1725.4" cy="1053.8" r="5.4"/><circle cx="1701.5" cy="1091.4" r="5.4"/><circle cx="1718.6" cy="1125.4" r="5.4"/><circle cx="1782.2" cy="1016.8" r="5.4"/><circle cx="1756.0" cy="1096.0" r="5.4"/><circle cx="1716.3" cy="1051.2" r="5.4"/><circle cx="1752.8" cy="1120.0" r="5.4"/><circle cx="1702.6" cy="1043.5" r="5.4"/><circle cx="1719.1" cy="1093.0" r="5.4"/><circle cx="1760.1" cy="1078.2" r="5.4"/><circle cx="1768.5" cy="1071.3" r="5.4"/><circle cx="1787.8" cy="1074.0" r="5.4"/><circle cx="1703.2" cy="1121.9" r="5.4"/><circle cx="1756.9" cy="1052.0" r="5.4"/><circle cx="1713.3" cy="1054.7" r="5.4"/><circle cx="1679.4" cy="1126.9" r="5.4"/><circle cx="1711.1" cy="1065.6" r="5.4"/><circle cx="1704.1" cy="1103.0" r="5.4"/><circle cx="1710.0" cy="1080.4" r="5.4"/><circle cx="1738.5" cy="1012.4" r="5.4"/><circle cx="1707.0" cy="1114.7" r="5.4"/><circle cx="1765.3" cy="1119.7" r="5.4"/><circle cx="1702.1" cy="1129.9" r="5.4"/><circle cx="1755.5" cy="1116.8" r="5.4"/><circle cx="1708.2" cy="1126.6" r="5.4"/><circle cx="1789.2" cy="1034.4" r="5.4"/><circle cx="1708.1" cy="1041.1" r="5.4"/><circle cx="1715.0" cy="1043.0" r="5.4"/><circle cx="1742.8" cy="1023.0" r="5.4"/><circle cx="1775.5" cy="1116.0" r="5.4"/><circle cx="1765.7" cy="1125.2" r="5.4"/><circle cx="1733.2" cy="1024.6" r="5.4"/><circle cx="1682.0" cy="1120.3" r="5.4"/><circle cx="1701.3" cy="1102.6" r="5.4"/><circle cx="1739.6" cy="1053.7" r="5.4"/><circle cx="1700.7" cy="1066.3" r="5.4"/><circle cx="1730.8" cy="1125.8" r="5.4"/><circle cx="1752.0" cy="1024.3" r="5.4"/><circle cx="1716.6" cy="1094.1" r="5.4"/><circle cx="1707.8" cy="1069.5" r="5.4"/><circle cx="1734.9" cy="1104.7" r="5.4"/><circle cx="1741.2" cy="1120.8" r="5.4"/><circle cx="1700.9" cy="1072.7" r="5.4"/><circle cx="1749.4" cy="1122.3" r="5.4"/><circle cx="1780.4" cy="1017.4" r="5.4"/><circle cx="1712.0" cy="1097.8" r="5.4"/><circle cx="1723.3" cy="1055.4" r="5.4"/><circle cx="1779.3" cy="1044.5" r="5.4"/><circle cx="1726.6" cy="1109.2" r="5.4"/><circle cx="1718.4" cy="1077.0" r="5.4"/><circle cx="1785.4" cy="1040.1" r="5.4"/><circle cx="1687.5" cy="1103.6" r="5.4"/><circle cx="1753.4" cy="1040.0" r="5.4"/><circle cx="1765.8" cy="1084.3" r="5.4"/><circle cx="1703.5" cy="1084.7" r="5.4"/><circle cx="1772.5" cy="1061.5" r="5.4"/><circle cx="1775.5" cy="1029.6" r="5.4"/><circle cx="1753.2" cy="1076.5" r="5.4"/><circle cx="1765.1" cy="1068.3" r="5.4"/><circle cx="1771.8" cy="1012.9" r="5.4"/><circle cx="1731.8" cy="1022.3" r="5.4"/><circle cx="1750.5" cy="1082.6" r="5.4"/><circle cx="1735.1" cy="1035.0" r="5.4"/><circle cx="1782.8" cy="1021.5" r="5.4"/><circle cx="1713.6" cy="1087.2" r="5.4"/><circle cx="1774.7" cy="1095.9" r="5.4"/><circle cx="1767.9" cy="1022.7" r="5.4"/><circle cx="1755.3" cy="1039.6" r="5.4"/><circle cx="1755.8" cy="1070.9" r="5.4"/><circle cx="1776.1" cy="1064.8" r="5.4"/><circle cx="1685.8" cy="1123.5" r="5.4"/><circle cx="1708.7" cy="1083.8" r="5.4"/><circle cx="1740.6" cy="1029.3" r="5.4"/><circle cx="1745.7" cy="1062.6" r="5.4"/><circle cx="1729.6" cy="1119.3" r="5.4"/><circle cx="1718.4" cy="1073.4" r="5.4"/><circle cx="1775.9" cy="1075.7" r="5.4"/><circle cx="1742.2" cy="1059.2" r="5.4"/><circle cx="1759.5" cy="1110.0" r="5.4"/><circle cx="1774.4" cy="1040.3" r="5.4"/><circle cx="1737.6" cy="1086.2" r="5.4"/><circle cx="1783.8" cy="1022.2" r="5.4"/><circle cx="1757.4" cy="1049.0" r="5.4"/><circle cx="1768.0" cy="1079.1" r="5.4"/><circle cx="1655.6" cy="1126.6" r="5.4"/><circle cx="1702.9" cy="1085.6" r="5.4"/><circle cx="1750.9" cy="1039.8" r="5.4"/><circle cx="1706.3" cy="1048.2" r="5.4"/><circle cx="1749.9" cy="1058.1" r="5.4"/><circle cx="1771.6" cy="1015.7" r="5.4"/><circle cx="1782.0" cy="1104.4" r="5.4"/><circle cx="1775.3" cy="1069.8" r="5.4"/><circle cx="1728.4" cy="1043.4" r="5.4"/><circle cx="1780.5" cy="1123.4" r="5.4"/><circle cx="1757.3" cy="1022.0" r="5.4"/><circle cx="1788.2" cy="1074.2" r="5.4"/><circle cx="1710.4" cy="1041.2" r="5.4"/><circle cx="1726.5" cy="1126.7" r="5.4"/><circle cx="1721.3" cy="1120.0" r="5.4"/><circle cx="1702.5" cy="1085.3" r="5.4"/><circle cx="1778.5" cy="1047.7" r="5.4"/><circle cx="1763.2" cy="1072.5" r="5.4"/><circle cx="1781.4" cy="1064.9" r="5.4"/><circle cx="1711.2" cy="1119.9" r="5.4"/><circle cx="1729.7" cy="1069.0" r="5.4"/><circle cx="1688.7" cy="1098.8" r="5.4"/><circle cx="1755.8" cy="1081.8" r="5.4"/><circle cx="1746.8" cy="1096.9" r="5.4"/><circle cx="1663.0" cy="1129.7" r="5.4"/><circle cx="1736.2" cy="1112.6" r="5.4"/><circle cx="1696.1" cy="1080.2" r="5.4"/><circle cx="1738.9" cy="1067.6" r="5.4"/><circle cx="1772.1" cy="1120.2" r="5.4"/><circle cx="1772.6" cy="1024.2" r="5.4"/><circle cx="1707.9" cy="1058.6" r="5.4"/><circle cx="1786.7" cy="1023.6" r="5.4"/><circle cx="1741.2" cy="1100.4" r="5.4"/><circle cx="1782.0" cy="1046.1" r="5.4"/><circle cx="1769.2" cy="1088.7" r="5.4"/><circle cx="1708.0" cy="1110.2" r="5.4"/><circle cx="1744.1" cy="1049.5" r="5.4"/><circle cx="1752.1" cy="1069.6" r="5.4"/><circle cx="1749.2" cy="1083.0" r="5.4"/><circle cx="1761.1" cy="1027.4" r="5.4"/><circle cx="1760.4" cy="1102.1" r="5.4"/><circle cx="1766.9" cy="1013.3" r="5.4"/><circle cx="1724.2" cy="1066.4" r="5.4"/><circle cx="1786.4" cy="1112.0" r="5.4"/><circle cx="1682.2" cy="1109.2" r="5.4"/><circle cx="1740.6" cy="1055.0" r="5.4"/><circle cx="1739.7" cy="1035.9" r="5.4"/><circle cx="1741.4" cy="1078.9" r="5.4"/><circle cx="1753.7" cy="1069.5" r="5.4"/><circle cx="1710.0" cy="1045.4" r="5.4"/><circle cx="1752.5" cy="1053.5" r="5.4"/><circle cx="1732.9" cy="1100.4" r="5.4"/><circle cx="1711.4" cy="1091.7" r="5.4"/><circle cx="1767.4" cy="1026.0" r="5.4"/><circle cx="1756.9" cy="1021.0" r="5.4"/><circle cx="1713.3" cy="1061.5" r="5.4"/><circle cx="1762.1" cy="1066.1" r="5.4"/><circle cx="1761.0" cy="1101.6" r="5.4"/><circle cx="1736.7" cy="1109.8" r="5.4"/><circle cx="1735.4" cy="1095.4" r="5.4"/><circle cx="1768.9" cy="1083.3" r="5.4"/><circle cx="1788.5" cy="1032.6" r="5.4"/><circle cx="1691.0" cy="1096.9" r="5.4"/><circle cx="1783.4" cy="1117.1" r="5.4"/><circle cx="1746.0" cy="1034.5" r="5.4"/><circle cx="1705.5" cy="1063.0" r="5.4"/><circle cx="1713.0" cy="1101.7" r="5.4"/><circle cx="1746.6" cy="1113.0" r="5.4"/><circle cx="1839.0" cy="1102.5" r="5.4"/><circle cx="1848.5" cy="1062.3" r="5.4"/><circle cx="1837.0" cy="1090.4" r="5.4"/><circle cx="1856.3" cy="1096.8" r="5.4"/><circle cx="1818.3" cy="1036.1" r="5.4"/><circle cx="1808.3" cy="1043.0" r="5.4"/><circle cx="1838.9" cy="1103.2" r="5.4"/><circle cx="1796.6" cy="1075.9" r="5.4"/><circle cx="1792.9" cy="1063.3" r="5.4"/><circle cx="1789.1" cy="1014.7" r="5.4"/><circle cx="1827.5" cy="1125.1" r="5.4"/><circle cx="1845.4" cy="1069.4" r="5.4"/><circle cx="1849.4" cy="1066.3" r="5.4"/><circle cx="1859.4" cy="1084.5" r="5.4"/><circle cx="1826.4" cy="1033.8" r="5.4"/><circle cx="1805.5" cy="1108.7" r="5.4"/><circle cx="1799.0" cy="1091.2" r="5.4"/><circle cx="1843.1" cy="1061.2" r="5.4"/><circle cx="1807.7" cy="1113.4" r="5.4"/><circle cx="1847.3" cy="1049.9" r="5.4"/><circle cx="1835.4" cy="1120.3" r="5.4"/><circle cx="1824.3" cy="1068.5" r="5.4"/><circle cx="1804.0" cy="1066.1" r="5.4"/><circle cx="1801.0" cy="1047.7" r="5.4"/><circle cx="1787.8" cy="1049.1" r="5.4"/><circle cx="1788.3" cy="1054.1" r="5.4"/><circle cx="1809.6" cy="1038.2" r="5.4"/><circle cx="1838.9" cy="1067.5" r="5.4"/><circle cx="1808.3" cy="1093.6" r="5.4"/><circle cx="1819.1" cy="1115.1" r="5.4"/><circle cx="1785.0" cy="1040.5" r="5.4"/><circle cx="1804.7" cy="1044.7" r="5.4"/><circle cx="1851.0" cy="1072.3" r="5.4"/><circle cx="1810.0" cy="1072.8" r="5.4"/><circle cx="1853.1" cy="1080.1" r="5.4"/><circle cx="1819.0" cy="1090.2" r="5.4"/><circle cx="1833.1" cy="1061.0" r="5.4"/><circle cx="1817.9" cy="1116.0" r="5.4"/><circle cx="1832.1" cy="1082.5" r="5.4"/><circle cx="1795.2" cy="1065.7" r="5.4"/><circle cx="1804.6" cy="1090.2" r="5.4"/><circle cx="1783.0" cy="1067.0" r="5.4"/><circle cx="1794.0" cy="1052.5" r="5.4"/><circle cx="1839.9" cy="1073.2" r="5.4"/><circle cx="1833.5" cy="1112.3" r="5.4"/><circle cx="1795.3" cy="1069.0" r="5.4"/><circle cx="1807.6" cy="1086.5" r="5.4"/><circle cx="1812.0" cy="1104.9" r="5.4"/><circle cx="1813.7" cy="1113.4" r="5.4"/><circle cx="1844.6" cy="1098.4" r="5.4"/><circle cx="1819.5" cy="1046.2" r="5.4"/><circle cx="1795.0" cy="1061.8" r="5.4"/><circle cx="1802.1" cy="1085.9" r="5.4"/><circle cx="1817.8" cy="1085.2" r="5.4"/><circle cx="1819.3" cy="1047.2" r="5.4"/><circle cx="1836.9" cy="1042.3" r="5.4"/><circle cx="1823.1" cy="1081.4" r="5.4"/><circle cx="1823.5" cy="1118.5" r="5.4"/><circle cx="1847.3" cy="1049.5" r="5.4"/><circle cx="1809.3" cy="1085.0" r="5.4"/><circle cx="1783.9" cy="1071.9" r="5.4"/><circle cx="1803.6" cy="1075.0" r="5.4"/><circle cx="1783.9" cy="1040.0" r="5.4"/><circle cx="1799.1" cy="1066.9" r="5.4"/><circle cx="1782.8" cy="1028.2" r="5.4"/><circle cx="1806.9" cy="1042.7" r="5.4"/><circle cx="1785.6" cy="1026.7" r="5.4"/><circle cx="1866.0" cy="1099.9" r="5.4"/><circle cx="1794.6" cy="1045.3" r="5.4"/><circle cx="1785.7" cy="1034.4" r="5.4"/><circle cx="1842.2" cy="1071.0" r="5.4"/><circle cx="1780.9" cy="1049.3" r="5.4"/><circle cx="1843.0" cy="1098.8" r="5.4"/><circle cx="1858.8" cy="1078.6" r="5.4"/><circle cx="1813.1" cy="1080.5" r="5.4"/><circle cx="1802.5" cy="1067.1" r="5.4"/><circle cx="1801.4" cy="1056.7" r="5.4"/><circle cx="1852.3" cy="1100.3" r="5.4"/><circle cx="1831.2" cy="1051.4" r="5.4"/><circle cx="1813.9" cy="1050.8" r="5.4"/><circle cx="1834.8" cy="1113.2" r="5.4"/><circle cx="1830.5" cy="1040.5" r="5.4"/><circle cx="1780.5" cy="1049.0" r="5.4"/><circle cx="1799.7" cy="1037.8" r="5.4"/><circle cx="1837.4" cy="1081.8" r="5.4"/><circle cx="1804.3" cy="1098.8" r="5.4"/><circle cx="1797.8" cy="1120.9" r="5.4"/><circle cx="1840.9" cy="1099.0" r="5.4"/><circle cx="1822.1" cy="1115.1" r="5.4"/><circle cx="1834.4" cy="1094.1" r="5.4"/><circle cx="1786.8" cy="1035.7" r="5.4"/><circle cx="1820.2" cy="1077.2" r="5.4"/><circle cx="1825.1" cy="1111.3" r="5.4"/><circle cx="1806.1" cy="1078.9" r="5.4"/><circle cx="1832.3" cy="1090.0" r="5.4"/><circle cx="1807.0" cy="1046.4" r="5.4"/><circle cx="1820.6" cy="1083.7" r="5.4"/><circle cx="1818.5" cy="1079.0" r="5.4"/><circle cx="1823.1" cy="1048.2" r="5.4"/><circle cx="1782.7" cy="1045.3" r="5.4"/><circle cx="1793.9" cy="1060.4" r="5.4"/><circle cx="1810.4" cy="1094.6" r="5.4"/><circle cx="1799.8" cy="1046.6" r="5.4"/><circle cx="1802.3" cy="1069.7" r="5.4"/><circle cx="1837.6" cy="1097.6" r="5.4"/><circle cx="1821.2" cy="1076.3" r="5.4"/><circle cx="1823.6" cy="1090.8" r="5.4"/><circle cx="1808.6" cy="1093.4" r="5.4"/><circle cx="1811.8" cy="1085.5" r="5.4"/><circle cx="1833.1" cy="1091.7" r="5.4"/><circle cx="1860.0" cy="1096.1" r="5.4"/><circle cx="1841.3" cy="1095.7" r="5.4"/><circle cx="1799.9" cy="1085.2" r="5.4"/><circle cx="1822.5" cy="1074.8" r="5.4"/><circle cx="1842.4" cy="1102.8" r="5.4"/><circle cx="1820.4" cy="1123.0" r="5.4"/><circle cx="1818.3" cy="1079.7" r="5.4"/><circle cx="1841.7" cy="1124.9" r="5.4"/><circle cx="1836.3" cy="1076.6" r="5.4"/><circle cx="1792.7" cy="1070.4" r="5.4"/><circle cx="1833.2" cy="1095.1" r="5.4"/><circle cx="1816.8" cy="1120.0" r="5.4"/><circle cx="1861.7" cy="1101.7" r="5.4"/><circle cx="1808.8" cy="1103.3" r="5.4"/><circle cx="1825.9" cy="1091.4" r="5.4"/><circle cx="1835.1" cy="1114.4" r="5.4"/><circle cx="1841.7" cy="1126.6" r="5.4"/><circle cx="1822.6" cy="1071.2" r="5.4"/><circle cx="1836.8" cy="1079.2" r="5.4"/><circle cx="1807.5" cy="1072.0" r="5.4"/><circle cx="1783.7" cy="1036.1" r="5.4"/><circle cx="1805.8" cy="1108.2" r="5.4"/><circle cx="1800.9" cy="1091.4" r="5.4"/><circle cx="1829.1" cy="1118.0" r="5.4"/><circle cx="1821.2" cy="1052.1" r="5.4"/><circle cx="1802.4" cy="1056.2" r="5.4"/><circle cx="1780.0" cy="1027.9" r="5.4"/><circle cx="1792.9" cy="1050.5" r="5.4"/><circle cx="1810.6" cy="1043.0" r="5.4"/><circle cx="1805.3" cy="1087.0" r="5.4"/><circle cx="1825.3" cy="1045.2" r="5.4"/><circle cx="1789.1" cy="1065.0" r="5.4"/><circle cx="1846.2" cy="1077.0" r="5.4"/><circle cx="1780.3" cy="1044.1" r="5.4"/><circle cx="1865.4" cy="1097.1" r="5.4"/><circle cx="1843.7" cy="1108.1" r="5.4"/><circle cx="1780.6" cy="1049.6" r="5.4"/><circle cx="1820.2" cy="1119.5" r="5.4"/><circle cx="1816.9" cy="1074.4" r="5.4"/><circle cx="1819.2" cy="1050.0" r="5.4"/><circle cx="1806.6" cy="1104.2" r="5.4"/><circle cx="1801.1" cy="1063.0" r="5.4"/><circle cx="1789.0" cy="1041.6" r="5.4"/><circle cx="1825.2" cy="1092.1" r="5.4"/><circle cx="1838.1" cy="1074.5" r="5.4"/><circle cx="1782.5" cy="1028.0" r="5.4"/><circle cx="1838.3" cy="1053.1" r="5.4"/><circle cx="1800.2" cy="1050.4" r="5.4"/><circle cx="1822.6" cy="1038.3" r="5.4"/><circle cx="1853.6" cy="1070.0" r="5.4"/><circle cx="1785.9" cy="1023.9" r="5.4"/><circle cx="1856.9" cy="1081.1" r="5.4"/><circle cx="1805.2" cy="1096.7" r="5.4"/><circle cx="1860.9" cy="1091.1" r="5.4"/><circle cx="1784.4" cy="1063.4" r="5.4"/><circle cx="1852.3" cy="1082.8" r="5.4"/><circle cx="1798.1" cy="1041.2" r="5.4"/><circle cx="1795.7" cy="1065.7" r="5.4"/><circle cx="1822.5" cy="1104.9" r="5.4"/><circle cx="1854.8" cy="1070.0" r="5.4"/><circle cx="1860.7" cy="1098.3" r="5.4"/><circle cx="1786.3" cy="1046.4" r="5.4"/><circle cx="1836.7" cy="1119.4" r="5.4"/><circle cx="1794.8" cy="1040.1" r="5.4"/><circle cx="1824.6" cy="1057.2" r="5.4"/><circle cx="1861.8" cy="1083.2" r="5.4"/><circle cx="1788.2" cy="1036.8" r="5.4"/><circle cx="1843.9" cy="1101.3" r="5.4"/><circle cx="1833.1" cy="1069.2" r="5.4"/><circle cx="1842.4" cy="1063.6" r="5.4"/><circle cx="1796.8" cy="1039.5" r="5.4"/><circle cx="1804.1" cy="1104.6" r="5.4"/><circle cx="1822.5" cy="1033.8" r="5.4"/><circle cx="1784.0" cy="1067.3" r="5.4"/><circle cx="1799.1" cy="1088.1" r="5.4"/><circle cx="1811.0" cy="1048.6" r="5.4"/><circle cx="1806.1" cy="1084.5" r="5.4"/><circle cx="1823.5" cy="1070.6" r="5.4"/><circle cx="1838.8" cy="1068.9" r="5.4"/><circle cx="1833.7" cy="1082.4" r="5.4"/><circle cx="1848.2" cy="1096.6" r="5.4"/><circle cx="1796.7" cy="1062.3" r="5.4"/><circle cx="1839.4" cy="1052.1" r="5.4"/><circle cx="1838.4" cy="1119.3" r="5.4"/><circle cx="1840.6" cy="1039.4" r="5.4"/><circle cx="1830.2" cy="1088.7" r="5.4"/><circle cx="1804.8" cy="1117.1" r="5.4"/><circle cx="1832.7" cy="1096.4" r="5.4"/><circle cx="1804.8" cy="1085.7" r="5.4"/><circle cx="1843.7" cy="1051.4" r="5.4"/><circle cx="1802.9" cy="1052.3" r="5.4"/><circle cx="1864.5" cy="1090.3" r="5.4"/><circle cx="1820.7" cy="1079.2" r="5.4"/><circle cx="1836.7" cy="1044.4" r="5.4"/><circle cx="1786.6" cy="1026.7" r="5.4"/><circle cx="1830.3" cy="1083.5" r="5.4"/><circle cx="1822.9" cy="1062.9" r="5.4"/><circle cx="1845.7" cy="1080.7" r="5.4"/><circle cx="1825.5" cy="1100.9" r="5.4"/><circle cx="1827.3" cy="1082.3" r="5.4"/><circle cx="1850.5" cy="1100.8" r="5.4"/><circle cx="1846.0" cy="1058.9" r="5.4"/><circle cx="1798.6" cy="1091.5" r="5.4"/><circle cx="1840.2" cy="1045.7" r="5.4"/><circle cx="1848.3" cy="1082.3" r="5.4"/><circle cx="1843.2" cy="1064.5" r="5.4"/><circle cx="1830.1" cy="1049.1" r="5.4"/><circle cx="1799.9" cy="1077.6" r="5.4"/><circle cx="1832.5" cy="1119.5" r="5.4"/><circle cx="1832.2" cy="1072.0" r="5.4"/><circle cx="1836.2" cy="1086.8" r="5.4"/><circle cx="1815.2" cy="1044.9" r="5.4"/><circle cx="1839.0" cy="1058.9" r="5.4"/><circle cx="1783.2" cy="1033.7" r="5.4"/><circle cx="1811.0" cy="1093.6" r="5.4"/><circle cx="1836.7" cy="1070.9" r="5.4"/><circle cx="1810.3" cy="1101.1" r="5.4"/><circle cx="1838.7" cy="1063.4" r="5.4"/><circle cx="1826.3" cy="1113.6" r="5.4"/><circle cx="1849.8" cy="1075.8" r="5.4"/><circle cx="1837.4" cy="1088.5" r="5.4"/><circle cx="1823.1" cy="1101.6" r="5.4"/><circle cx="1809.9" cy="1042.1" r="5.4"/><circle cx="1811.8" cy="1128.0" r="5.4"/><circle cx="1796.6" cy="1119.0" r="5.4"/><circle cx="1856.3" cy="1092.9" r="5.4"/><circle cx="1803.0" cy="1098.7" r="5.4"/><circle cx="1775.9" cy="1198.7" r="5.4"/><circle cx="1783.5" cy="1198.4" r="5.4"/><circle cx="1663.3" cy="1150.2" r="5.4"/><circle cx="1741.7" cy="1164.4" r="5.4"/><circle cx="1727.7" cy="1190.5" r="5.4"/><circle cx="1758.6" cy="1196.6" r="5.4"/><circle cx="1736.1" cy="1195.1" r="5.4"/><circle cx="1765.3" cy="1126.0" r="5.4"/><circle cx="1774.2" cy="1200.7" r="5.4"/><circle cx="1768.6" cy="1212.2" r="5.4"/><circle cx="1697.1" cy="1139.2" r="5.4"/><circle cx="1755.0" cy="1213.3" r="5.4"/><circle cx="1711.1" cy="1158.7" r="5.4"/><circle cx="1710.1" cy="1151.1" r="5.4"/><circle cx="1667.4" cy="1149.5" r="5.4"/><circle cx="1749.8" cy="1173.1" r="5.4"/><circle cx="1671.5" cy="1152.5" r="5.4"/><circle cx="1722.3" cy="1178.2" r="5.4"/><circle cx="1777.5" cy="1157.5" r="5.4"/><circle cx="1692.2" cy="1138.2" r="5.4"/><circle cx="1786.5" cy="1211.5" r="5.4"/><circle cx="1666.0" cy="1156.0" r="5.4"/><circle cx="1691.0" cy="1145.6" r="5.4"/><circle cx="1742.3" cy="1190.0" r="5.4"/><circle cx="1684.4" cy="1156.7" r="5.4"/><circle cx="1662.3" cy="1139.2" r="5.4"/><circle cx="1706.4" cy="1134.3" r="5.4"/><circle cx="1718.9" cy="1156.7" r="5.4"/><circle cx="1756.1" cy="1158.2" r="5.4"/><circle cx="1779.5" cy="1153.3" r="5.4"/><circle cx="1779.4" cy="1183.6" r="5.4"/><circle cx="1772.8" cy="1182.7" r="5.4"/><circle cx="1721.7" cy="1157.2" r="5.4"/><circle cx="1753.9" cy="1170.7" r="5.4"/><circle cx="1772.7" cy="1212.9" r="5.4"/><circle cx="1705.0" cy="1128.9" r="5.4"/><circle cx="1743.6" cy="1210.3" r="5.4"/><circle cx="1758.8" cy="1182.2" r="5.4"/><circle cx="1723.3" cy="1199.4" r="5.4"/><circle cx="1764.2" cy="1194.4" r="5.4"/><circle cx="1679.3" cy="1137.5" r="5.4"/><circle cx="1678.3" cy="1140.8" r="5.4"/><circle cx="1669.9" cy="1145.7" r="5.4"/><circle cx="1765.2" cy="1205.8" r="5.4"/><circle cx="1771.8" cy="1215.2" r="5.4"/><circle cx="1749.9" cy="1158.2" r="5.4"/><circle cx="1704.1" cy="1172.2" r="5.4"/><circle cx="1758.6" cy="1154.0" r="5.4"/><circle cx="1709.4" cy="1177.2" r="5.4"/><circle cx="1778.8" cy="1200.6" r="5.4"/><circle cx="1716.7" cy="1145.0" r="5.4"/><circle cx="1699.5" cy="1133.1" r="5.4"/><circle cx="1774.9" cy="1199.2" r="5.4"/><circle cx="1723.8" cy="1146.9" r="5.4"/><circle cx="1721.6" cy="1186.8" r="5.4"/><circle cx="1765.6" cy="1204.7" r="5.4"/><circle cx="1690.1" cy="1154.7" r="5.4"/><circle cx="1735.0" cy="1193.7" r="5.4"/><circle cx="1771.9" cy="1171.3" r="5.4"/><circle cx="1721.2" cy="1194.9" r="5.4"/><circle cx="1740.5" cy="1155.3" r="5.4"/><circle cx="1708.3" cy="1154.7" r="5.4"/><circle cx="1646.8" cy="1142.7" r="5.4"/><circle cx="1751.1" cy="1171.1" r="5.4"/><circle cx="1746.4" cy="1174.3" r="5.4"/><circle cx="1789.7" cy="1199.2" r="5.4"/><circle cx="1774.3" cy="1207.4" r="5.4"/><circle cx="1746.1" cy="1144.0" r="5.4"/><circle cx="1778.6" cy="1205.9" r="5.4"/><circle cx="1747.6" cy="1179.7" r="5.4"/><circle cx="1715.5" cy="1134.3" r="5.4"/><circle cx="1746.7" cy="1241.3" r="5.4"/><circle cx="1663.1" cy="1138.1" r="5.4"/><circle cx="1742.8" cy="1178.2" r="5.4"/><circle cx="1710.0" cy="1153.9" r="5.4"/><circle cx="1754.7" cy="1222.1" r="5.4"/><circle cx="1749.2" cy="1178.4" r="5.4"/><circle cx="1714.2" cy="1174.2" r="5.4"/><circle cx="1710.4" cy="1165.5" r="5.4"/><circle cx="1734.2" cy="1172.3" r="5.4"/><circle cx="1710.6" cy="1193.2" r="5.4"/><circle cx="1769.1" cy="1203.4" r="5.4"/><circle cx="1773.4" cy="1155.9" r="5.4"/><circle cx="1759.8" cy="1173.7" r="5.4"/><circle cx="1727.1" cy="1153.0" r="5.4"/><circle cx="1774.1" cy="1186.1" r="5.4"/><circle cx="1722.5" cy="1160.5" r="5.4"/><circle cx="1744.9" cy="1158.0" r="5.4"/><circle cx="1742.9" cy="1201.5" r="5.4"/><circle cx="1685.4" cy="1146.3" r="5.4"/><circle cx="1690.1" cy="1140.6" r="5.4"/><circle cx="1703.1" cy="1154.8" r="5.4"/><circle cx="1715.2" cy="1141.4" r="5.4"/><circle cx="1658.9" cy="1143.0" r="5.4"/><circle cx="1731.1" cy="1162.4" r="5.4"/><circle cx="1740.9" cy="1159.2" r="5.4"/><circle cx="1754.2" cy="1167.1" r="5.4"/><circle cx="1770.6" cy="1177.7" r="5.4"/><circle cx="1744.1" cy="1218.3" r="5.4"/><circle cx="1745.7" cy="1218.6" r="5.4"/><circle cx="1692.1" cy="1143.9" r="5.4"/><circle cx="1656.6" cy="1127.2" r="5.4"/><circle cx="1717.5" cy="1169.8" r="5.4"/><circle cx="1701.8" cy="1130.1" r="5.4"/><circle cx="1782.9" cy="1216.1" r="5.4"/><circle cx="1655.6" cy="1150.2" r="5.4"/><circle cx="1757.7" cy="1188.1" r="5.4"/><circle cx="1752.6" cy="1218.4" r="5.4"/><circle cx="1671.1" cy="1142.2" r="5.4"/><circle cx="1752.4" cy="1226.3" r="5.4"/><circle cx="1750.4" cy="1161.6" r="5.4"/><circle cx="1677.6" cy="1149.6" r="5.4"/><circle cx="1706.2" cy="1146.3" r="5.4"/><circle cx="1778.8" cy="1196.0" r="5.4"/><circle cx="1766.5" cy="1186.1" r="5.4"/><circle cx="1659.7" cy="1153.0" r="5.4"/><circle cx="1768.6" cy="1198.2" r="5.4"/><circle cx="1757.5" cy="1248.7" r="5.4"/><circle cx="1756.0" cy="1200.8" r="5.4"/><circle cx="1753.0" cy="1191.1" r="5.4"/><circle cx="1778.8" cy="1190.4" r="5.4"/><circle cx="1789.1" cy="1202.8" r="5.4"/><circle cx="1714.4" cy="1181.7" r="5.4"/><circle cx="1735.0" cy="1201.4" r="5.4"/><circle cx="1773.1" cy="1222.2" r="5.4"/><circle cx="1749.1" cy="1214.3" r="5.4"/><circle cx="1680.8" cy="1150.5" r="5.4"/><circle cx="1782.6" cy="1153.7" r="5.4"/><circle cx="1762.5" cy="1228.7" r="5.4"/><circle cx="1701.4" cy="1128.0" r="5.4"/><circle cx="1746.7" cy="1169.1" r="5.4"/><circle cx="1757.6" cy="1195.0" r="5.4"/><circle cx="1726.5" cy="1125.3" r="5.4"/><circle cx="1651.9" cy="1134.1" r="5.4"/><circle cx="1783.7" cy="1210.0" r="5.4"/><circle cx="1724.8" cy="1210.7" r="5.4"/><circle cx="1770.5" cy="1203.9" r="5.4"/><circle cx="1704.7" cy="1173.8" r="5.4"/><circle cx="1736.8" cy="1167.7" r="5.4"/><circle cx="1744.5" cy="1159.1" r="5.4"/><circle cx="1752.1" cy="1194.5" r="5.4"/><circle cx="1754.4" cy="1161.5" r="5.4"/><circle cx="1748.7" cy="1139.5" r="5.4"/><circle cx="1722.5" cy="1167.9" r="5.4"/><circle cx="1711.3" cy="1161.0" r="5.4"/><circle cx="1676.5" cy="1146.8" r="5.4"/><circle cx="1690.5" cy="1140.5" r="5.4"/><circle cx="1703.6" cy="1140.0" r="5.4"/><circle cx="1705.0" cy="1188.0" r="5.4"/><circle cx="1747.0" cy="1230.0" r="5.4"/><circle cx="1782.2" cy="1164.2" r="5.4"/><circle cx="1770.0" cy="1167.9" r="5.4"/><circle cx="1733.7" cy="1149.6" r="5.4"/><circle cx="1712.7" cy="1165.5" r="5.4"/><circle cx="1786.4" cy="1210.6" r="5.4"/><circle cx="1716.6" cy="1149.0" r="5.4"/><circle cx="1740.9" cy="1158.6" r="5.4"/><circle cx="1713.3" cy="1129.0" r="5.4"/><circle cx="1717.0" cy="1170.7" r="5.4"/><circle cx="1716.0" cy="1175.3" r="5.4"/><circle cx="1727.5" cy="1159.2" r="5.4"/><circle cx="1742.8" cy="1177.7" r="5.4"/><circle cx="1746.1" cy="1168.3" r="5.4"/><circle cx="1736.2" cy="1149.4" r="5.4"/><circle cx="1713.3" cy="1186.2" r="5.4"/><circle cx="1643.4" cy="1140.7" r="5.4"/><circle cx="1761.9" cy="1229.9" r="5.4"/><circle cx="1761.1" cy="1245.2" r="5.4"/><circle cx="1670.2" cy="1143.8" r="5.4"/><circle cx="1672.3" cy="1154.3" r="5.4"/><circle cx="1729.6" cy="1212.4" r="5.4"/><circle cx="1720.0" cy="1193.9" r="5.4"/><circle cx="1763.6" cy="1232.0" r="5.4"/><circle cx="1690.4" cy="1130.2" r="5.4"/><circle cx="1711.2" cy="1128.3" r="5.4"/><circle cx="1735.9" cy="1184.7" r="5.4"/><circle cx="1752.3" cy="1228.6" r="5.4"/><circle cx="1750.2" cy="1211.2" r="5.4"/><circle cx="1736.3" cy="1152.2" r="5.4"/><circle cx="1770.5" cy="1183.8" r="5.4"/><circle cx="1720.2" cy="1149.6" r="5.4"/><circle cx="1764.9" cy="1183.9" r="5.4"/><circle cx="1751.6" cy="1229.7" r="5.4"/><circle cx="1718.4" cy="1197.7" r="5.4"/><circle cx="1710.1" cy="1154.5" r="5.4"/><circle cx="1760.1" cy="1239.4" r="5.4"/><circle cx="1646.3" cy="1129.1" r="5.4"/><circle cx="1711.1" cy="1134.9" r="5.4"/><circle cx="1706.4" cy="1167.5" r="5.4"/><circle cx="1704.8" cy="1148.1" r="5.4"/><circle cx="1785.1" cy="1205.9" r="5.4"/><circle cx="1766.8" cy="1228.6" r="5.4"/><circle cx="1704.9" cy="1187.9" r="5.4"/><circle cx="1765.2" cy="1214.9" r="5.4"/><circle cx="1700.6" cy="1148.5" r="5.4"/><circle cx="1750.0" cy="1161.4" r="5.4"/><circle cx="1680.5" cy="1156.2" r="5.4"/><circle cx="1743.4" cy="1205.4" r="5.4"/><circle cx="1780.6" cy="1198.3" r="5.4"/><circle cx="1788.1" cy="1166.4" r="5.4"/><circle cx="1663.8" cy="1139.1" r="5.4"/><circle cx="1686.7" cy="1157.8" r="5.4"/><circle cx="1680.4" cy="1128.6" r="5.4"/><circle cx="1708.5" cy="1191.0" r="5.4"/><circle cx="1780.2" cy="1195.9" r="5.4"/><circle cx="1745.9" cy="1195.4" r="5.4"/><circle cx="1763.9" cy="1173.1" r="5.4"/><circle cx="1710.5" cy="1145.9" r="5.4"/><circle cx="1747.2" cy="1176.8" r="5.4"/><circle cx="1685.3" cy="1134.6" r="5.4"/><circle cx="1773.0" cy="1188.3" r="5.4"/><circle cx="1701.7" cy="1141.2" r="5.4"/><circle cx="1777.3" cy="1207.3" r="5.4"/><circle cx="1785.3" cy="1175.7" r="5.4"/><circle cx="1695.7" cy="1132.1" r="5.4"/><circle cx="1674.7" cy="1150.9" r="5.4"/><circle cx="1714.3" cy="1141.4" r="5.4"/><circle cx="1758.4" cy="1237.4" r="5.4"/><circle cx="1771.4" cy="1191.3" r="5.4"/><circle cx="1714.9" cy="1154.7" r="5.4"/><circle cx="1714.2" cy="1178.5" r="5.4"/><circle cx="1720.3" cy="1212.0" r="5.4"/><circle cx="1721.7" cy="1153.4" r="5.4"/><circle cx="1687.3" cy="1151.8" r="5.4"/><circle cx="1752.3" cy="1237.2" r="5.4"/><circle cx="1722.3" cy="1166.6" r="5.4"/><circle cx="1715.7" cy="1132.3" r="5.4"/><circle cx="1717.4" cy="1146.9" r="5.4"/><circle cx="1787.6" cy="1202.1" r="5.4"/><circle cx="1734.3" cy="1202.4" r="5.4"/><circle cx="1771.8" cy="1164.3" r="5.4"/><circle cx="1712.1" cy="1149.9" r="5.4"/><circle cx="1659.7" cy="1145.2" r="5.4"/><circle cx="1759.8" cy="1230.5" r="5.4"/><circle cx="1690.3" cy="1170.7" r="5.4"/><circle cx="1775.6" cy="1157.1" r="5.4"/><circle cx="1733.9" cy="1195.5" r="5.4"/><circle cx="1759.8" cy="1235.5" r="5.4"/><circle cx="1722.5" cy="1188.1" r="5.4"/><circle cx="1702.5" cy="1143.2" r="5.4"/><circle cx="1656.3" cy="1128.7" r="5.4"/><circle cx="1693.3" cy="1128.3" r="5.4"/><circle cx="1672.9" cy="1126.7" r="5.4"/><circle cx="1783.1" cy="1181.8" r="5.4"/><circle cx="1678.3" cy="1130.8" r="5.4"/><circle cx="1736.6" cy="1164.3" r="5.4"/><circle cx="1747.0" cy="1167.5" r="5.4"/><circle cx="1724.7" cy="1148.4" r="5.4"/><circle cx="1724.4" cy="1130.2" r="5.4"/><circle cx="1726.8" cy="1183.9" r="5.4"/><circle cx="1727.2" cy="1213.2" r="5.4"/><circle cx="1707.1" cy="1174.7" r="5.4"/><circle cx="1748.8" cy="1147.5" r="5.4"/><circle cx="1692.0" cy="1154.9" r="5.4"/><circle cx="1762.0" cy="1160.9" r="5.4"/><circle cx="1755.6" cy="1219.7" r="5.4"/><circle cx="1777.4" cy="1160.9" r="5.4"/><circle cx="1763.2" cy="1180.4" r="5.4"/><circle cx="1744.9" cy="1218.4" r="5.4"/><circle cx="1749.8" cy="1239.8" r="5.4"/><circle cx="1758.5" cy="1189.9" r="5.4"/><circle cx="1771.3" cy="1187.7" r="5.4"/><circle cx="1725.8" cy="1187.4" r="5.4"/><circle cx="1782.3" cy="1163.6" r="5.4"/><circle cx="1783.2" cy="1165.1" r="5.4"/><circle cx="1786.4" cy="1188.0" r="5.4"/><circle cx="1759.6" cy="1227.7" r="5.4"/><circle cx="1725.4" cy="1177.2" r="5.4"/><circle cx="1759.2" cy="1180.2" r="5.4"/><circle cx="1754.4" cy="1204.8" r="5.4"/><circle cx="1714.9" cy="1126.4" r="5.4"/><circle cx="1780.7" cy="1210.5" r="5.4"/><circle cx="1740.6" cy="1196.9" r="5.4"/><circle cx="1758.1" cy="1193.7" r="5.4"/><circle cx="1721.2" cy="1157.1" r="5.4"/><circle cx="1732.9" cy="1149.5" r="5.4"/><circle cx="1663.4" cy="1152.2" r="5.4"/><circle cx="1670.2" cy="1138.3" r="5.4"/><circle cx="1765.2" cy="1197.0" r="5.4"/><circle cx="1741.2" cy="1211.9" r="5.4"/><circle cx="1676.4" cy="1143.6" r="5.4"/><circle cx="1735.1" cy="1161.5" r="5.4"/><circle cx="1786.9" cy="1175.1" r="5.4"/><circle cx="1726.7" cy="1166.0" r="5.4"/><circle cx="1720.7" cy="1173.3" r="5.4"/><circle cx="1752.4" cy="1129.8" r="5.4"/><circle cx="1786.0" cy="1199.1" r="5.4"/><circle cx="1786.8" cy="1183.7" r="5.4"/><circle cx="1770.4" cy="1229.9" r="5.4"/><circle cx="1778.9" cy="1182.1" r="5.4"/><circle cx="1716.8" cy="1129.3" r="5.4"/><circle cx="1727.6" cy="1199.9" r="5.4"/><circle cx="1685.8" cy="1126.1" r="5.4"/><circle cx="1700.7" cy="1172.4" r="5.4"/><circle cx="1748.0" cy="1212.0" r="5.4"/><circle cx="1744.3" cy="1223.1" r="5.4"/><circle cx="1732.5" cy="1164.2" r="5.4"/><circle cx="1777.4" cy="1176.5" r="5.4"/><circle cx="1746.5" cy="1133.5" r="5.4"/><circle cx="1784.8" cy="1167.4" r="5.4"/><circle cx="1657.0" cy="1134.2" r="5.4"/><circle cx="1739.4" cy="1184.0" r="5.4"/><circle cx="1715.3" cy="1150.0" r="5.4"/><circle cx="1775.1" cy="1217.0" r="5.4"/><circle cx="1732.8" cy="1204.8" r="5.4"/><circle cx="1750.1" cy="1203.0" r="5.4"/><circle cx="1722.5" cy="1189.4" r="5.4"/><circle cx="1743.7" cy="1176.6" r="5.4"/><circle cx="1760.8" cy="1228.4" r="5.4"/><circle cx="1710.6" cy="1198.0" r="5.4"/><circle cx="1654.0" cy="1148.6" r="5.4"/><circle cx="1757.7" cy="1172.6" r="5.4"/><circle cx="1731.3" cy="1179.8" r="5.4"/><circle cx="1721.1" cy="1158.2" r="5.4"/><circle cx="1730.9" cy="1200.1" r="5.4"/><circle cx="1769.3" cy="1157.3" r="5.4"/><circle cx="1726.5" cy="1198.4" r="5.4"/><circle cx="1744.8" cy="1187.9" r="5.4"/><circle cx="1762.2" cy="1125.7" r="5.4"/><circle cx="1743.0" cy="1202.4" r="5.4"/><circle cx="1685.4" cy="1136.1" r="5.4"/><circle cx="1686.3" cy="1130.3" r="5.4"/><circle cx="1669.0" cy="1138.8" r="5.4"/><circle cx="1664.8" cy="1129.7" r="5.4"/><circle cx="1786.4" cy="1169.7" r="5.4"/><circle cx="1753.9" cy="1177.5" r="5.4"/><circle cx="1717.2" cy="1156.3" r="5.4"/><circle cx="1788.0" cy="1206.2" r="5.4"/><circle cx="1727.4" cy="1195.5" r="5.4"/><circle cx="1745.4" cy="1147.8" r="5.4"/><circle cx="1773.7" cy="1218.5" r="5.4"/><circle cx="1789.7" cy="1159.3" r="5.4"/><circle cx="1765.6" cy="1197.9" r="5.4"/><circle cx="1695.0" cy="1154.9" r="5.4"/><circle cx="1656.8" cy="1129.3" r="5.4"/><circle cx="1705.2" cy="1140.0" r="5.4"/><circle cx="1661.3" cy="1150.1" r="5.4"/><circle cx="1764.1" cy="1240.2" r="5.4"/><circle cx="1770.9" cy="1216.7" r="5.4"/><circle cx="1771.6" cy="1166.3" r="5.4"/><circle cx="1731.6" cy="1166.1" r="5.4"/><circle cx="1778.9" cy="1158.3" r="5.4"/><circle cx="1790.0" cy="1154.4" r="5.4"/><circle cx="1726.3" cy="1151.7" r="5.4"/><circle cx="1765.8" cy="1185.4" r="5.4"/><circle cx="1712.1" cy="1145.4" r="5.4"/><circle cx="1780.5" cy="1199.8" r="5.4"/><circle cx="1740.6" cy="1173.9" r="5.4"/><circle cx="1747.1" cy="1172.1" r="5.4"/><circle cx="1754.5" cy="1232.4" r="5.4"/><circle cx="1717.6" cy="1207.0" r="5.4"/><circle cx="1780.2" cy="1205.8" r="5.4"/><circle cx="1786.4" cy="1156.4" r="5.4"/><circle cx="1771.0" cy="1218.3" r="5.4"/><circle cx="1726.1" cy="1198.7" r="5.4"/><circle cx="1666.1" cy="1127.1" r="5.4"/><circle cx="1750.9" cy="1171.5" r="5.4"/><circle cx="1736.2" cy="1151.6" r="5.4"/><circle cx="1776.9" cy="1191.6" r="5.4"/><circle cx="1679.8" cy="1141.6" r="5.4"/><circle cx="1758.9" cy="1235.7" r="5.4"/><circle cx="1773.9" cy="1208.7" r="5.4"/><circle cx="1789.7" cy="1165.7" r="5.4"/><circle cx="1736.2" cy="1128.2" r="5.4"/><circle cx="1711.6" cy="1176.4" r="5.4"/><circle cx="1698.1" cy="1127.4" r="5.4"/><circle cx="1737.3" cy="1169.1" r="5.4"/><circle cx="1703.0" cy="1139.4" r="5.4"/><circle cx="1734.3" cy="1199.6" r="5.4"/><circle cx="1695.6" cy="1190.0" r="5.4"/><circle cx="1645.6" cy="1141.5" r="5.4"/><circle cx="1670.0" cy="1148.2" r="5.4"/><circle cx="1667.1" cy="1138.5" r="5.4"/><circle cx="1778.0" cy="1198.0" r="5.4"/><circle cx="1714.0" cy="1194.8" r="5.4"/><circle cx="1750.7" cy="1178.1" r="5.4"/><circle cx="1718.3" cy="1171.1" r="5.4"/><circle cx="1745.6" cy="1153.7" r="5.4"/><circle cx="1792.6" cy="1169.4" r="5.4"/><circle cx="1853.7" cy="1148.7" r="5.4"/><circle cx="1789.9" cy="1163.3" r="5.4"/><circle cx="1811.5" cy="1218.7" r="5.4"/><circle cx="1814.0" cy="1191.6" r="5.4"/><circle cx="1844.8" cy="1151.5" r="5.4"/><circle cx="1845.6" cy="1155.0" r="5.4"/><circle cx="1781.1" cy="1174.9" r="5.4"/><circle cx="1810.6" cy="1182.6" r="5.4"/><circle cx="1820.1" cy="1200.4" r="5.4"/><circle cx="1814.9" cy="1144.1" r="5.4"/><circle cx="1796.5" cy="1161.3" r="5.4"/><circle cx="1820.3" cy="1188.0" r="5.4"/><circle cx="1840.0" cy="1142.6" r="5.4"/><circle cx="1802.1" cy="1144.3" r="5.4"/><circle cx="1793.6" cy="1183.2" r="5.4"/><circle cx="1808.9" cy="1223.5" r="5.4"/><circle cx="1889.3" cy="1178.8" r="5.4"/><circle cx="1867.2" cy="1132.5" r="5.4"/><circle cx="1809.2" cy="1174.9" r="5.4"/><circle cx="1827.2" cy="1126.4" r="5.4"/><circle cx="1845.5" cy="1147.2" r="5.4"/><circle cx="1814.9" cy="1169.9" r="5.4"/><circle cx="1787.4" cy="1192.1" r="5.4"/><circle cx="1860.2" cy="1139.4" r="5.4"/><circle cx="1792.4" cy="1162.9" r="5.4"/><circle cx="1821.1" cy="1204.5" r="5.4"/><circle cx="1893.2" cy="1175.1" r="5.4"/><circle cx="1837.0" cy="1183.9" r="5.4"/><circle cx="1792.8" cy="1198.3" r="5.4"/><circle cx="1866.4" cy="1179.1" r="5.4"/><circle cx="1874.7" cy="1164.4" r="5.4"/><circle cx="1814.7" cy="1145.1" r="5.4"/><circle cx="1800.5" cy="1218.3" r="5.4"/><circle cx="1899.6" cy="1175.0" r="5.4"/><circle cx="1801.4" cy="1227.0" r="5.4"/><circle cx="1793.7" cy="1183.5" r="5.4"/><circle cx="1812.5" cy="1199.1" r="5.4"/><circle cx="1791.8" cy="1223.5" r="5.4"/><circle cx="1882.7" cy="1186.3" r="5.4"/><circle cx="1826.5" cy="1217.6" r="5.4"/><circle cx="1835.4" cy="1129.9" r="5.4"/><circle cx="1864.7" cy="1129.1" r="5.4"/><circle cx="1848.2" cy="1149.8" r="5.4"/><circle cx="1829.8" cy="1172.7" r="5.4"/><circle cx="1822.6" cy="1151.1" r="5.4"/><circle cx="1856.2" cy="1128.0" r="5.4"/><circle cx="1790.0" cy="1198.1" r="5.4"/><circle cx="1808.8" cy="1137.7" r="5.4"/><circle cx="1827.3" cy="1128.2" r="5.4"/><circle cx="1802.9" cy="1194.5" r="5.4"/><circle cx="1862.8" cy="1136.3" r="5.4"/><circle cx="1803.7" cy="1167.3" r="5.4"/><circle cx="1843.2" cy="1155.9" r="5.4"/><circle cx="1790.0" cy="1157.5" r="5.4"/><circle cx="1842.1" cy="1195.4" r="5.4"/><circle cx="1783.5" cy="1207.0" r="5.4"/><circle cx="1881.3" cy="1164.3" r="5.4"/><circle cx="1853.9" cy="1136.0" r="5.4"/><circle cx="1893.6" cy="1173.8" r="5.4"/><circle cx="1835.6" cy="1150.2" r="5.4"/><circle cx="1830.0" cy="1184.5" r="5.4"/><circle cx="1814.8" cy="1205.0" r="5.4"/><circle cx="1782.1" cy="1182.4" r="5.4"/><circle cx="1855.8" cy="1167.8" r="5.4"/><circle cx="1794.0" cy="1159.2" r="5.4"/><circle cx="1784.6" cy="1220.4" r="5.4"/><circle cx="1894.1" cy="1174.8" r="5.4"/><circle cx="1805.5" cy="1151.6" r="5.4"/><circle cx="1787.0" cy="1220.2" r="5.4"/><circle cx="1789.8" cy="1220.2" r="5.4"/><circle cx="1793.6" cy="1217.2" r="5.4"/><circle cx="1838.5" cy="1173.1" r="5.4"/><circle cx="1888.5" cy="1197.5" r="5.4"/><circle cx="1834.1" cy="1130.2" r="5.4"/><circle cx="1796.8" cy="1203.6" r="5.4"/><circle cx="1812.7" cy="1175.1" r="5.4"/><circle cx="1810.3" cy="1213.2" r="5.4"/><circle cx="1869.0" cy="1138.2" r="5.4"/><circle cx="1781.8" cy="1228.8" r="5.4"/><circle cx="1800.9" cy="1224.1" r="5.4"/><circle cx="1894.8" cy="1172.8" r="5.4"/><circle cx="1844.0" cy="1133.3" r="5.4"/><circle cx="1789.3" cy="1221.8" r="5.4"/><circle cx="1855.5" cy="1154.5" r="5.4"/><circle cx="1803.2" cy="1133.7" r="5.4"/><circle cx="1786.5" cy="1218.7" r="5.4"/><circle cx="1818.1" cy="1144.3" r="5.4"/><circle cx="1848.5" cy="1166.8" r="5.4"/><circle cx="1843.7" cy="1177.2" r="5.4"/><circle cx="1845.6" cy="1155.4" r="5.4"/><circle cx="1805.6" cy="1172.6" r="5.4"/><circle cx="1836.0" cy="1176.3" r="5.4"/><circle cx="1821.5" cy="1196.5" r="5.4"/><circle cx="1780.1" cy="1203.9" r="5.4"/><circle cx="1824.6" cy="1182.5" r="5.4"/><circle cx="1868.1" cy="1154.2" r="5.4"/><circle cx="1788.0" cy="1197.8" r="5.4"/><circle cx="1899.7" cy="1176.8" r="5.4"/><circle cx="1893.4" cy="1183.5" r="5.4"/><circle cx="1810.6" cy="1225.5" r="5.4"/><circle cx="1853.9" cy="1182.1" r="5.4"/><circle cx="1856.5" cy="1164.2" r="5.4"/><circle cx="1809.1" cy="1229.1" r="5.4"/><circle cx="1805.7" cy="1165.7" r="5.4"/><circle cx="1851.7" cy="1181.5" r="5.4"/><circle cx="1791.2" cy="1156.0" r="5.4"/><circle cx="1838.4" cy="1137.5" r="5.4"/><circle cx="1833.3" cy="1178.2" r="5.4"/><circle cx="1842.1" cy="1150.1" r="5.4"/><circle cx="1817.1" cy="1146.8" r="5.4"/><circle cx="1833.4" cy="1162.6" r="5.4"/><circle cx="1872.7" cy="1161.2" r="5.4"/><circle cx="1818.0" cy="1148.2" r="5.4"/><circle cx="1856.7" cy="1133.6" r="5.4"/><circle cx="1849.9" cy="1160.1" r="5.4"/><circle cx="1860.9" cy="1137.0" r="5.4"/><circle cx="1863.5" cy="1155.4" r="5.4"/><circle cx="1800.3" cy="1162.1" r="5.4"/><circle cx="1827.2" cy="1164.7" r="5.4"/><circle cx="1887.2" cy="1181.8" r="5.4"/><circle cx="1819.8" cy="1143.1" r="5.4"/><circle cx="1833.8" cy="1163.6" r="5.4"/><circle cx="1782.5" cy="1196.7" r="5.4"/><circle cx="1887.7" cy="1171.3" r="5.4"/><circle cx="1870.4" cy="1145.9" r="5.4"/><circle cx="1823.9" cy="1163.6" r="5.4"/><circle cx="1821.2" cy="1192.6" r="5.4"/><circle cx="1780.6" cy="1216.9" r="5.4"/><circle cx="1822.6" cy="1203.9" r="5.4"/><circle cx="1805.6" cy="1212.6" r="5.4"/><circle cx="1866.3" cy="1134.5" r="5.4"/><circle cx="1804.3" cy="1228.6" r="5.4"/><circle cx="1790.7" cy="1223.8" r="5.4"/><circle cx="1867.0" cy="1140.9" r="5.4"/><circle cx="1806.2" cy="1164.1" r="5.4"/><circle cx="1818.6" cy="1222.4" r="5.4"/><circle cx="1832.9" cy="1152.9" r="5.4"/><circle cx="1840.7" cy="1170.2" r="5.4"/><circle cx="1860.9" cy="1135.0" r="5.4"/><circle cx="1815.5" cy="1135.4" r="5.4"/><circle cx="1794.9" cy="1160.3" r="5.4"/><circle cx="1820.5" cy="1161.9" r="5.4"/><circle cx="1799.6" cy="1214.9" r="5.4"/><circle cx="1787.8" cy="1172.7" r="5.4"/><circle cx="1788.4" cy="1199.7" r="5.4"/><circle cx="1805.5" cy="1207.2" r="5.4"/><circle cx="1814.2" cy="1128.2" r="5.4"/><circle cx="1834.4" cy="1151.3" r="5.4"/><circle cx="1841.4" cy="1125.8" r="5.4"/><circle cx="1832.4" cy="1150.1" r="5.4"/><circle cx="1823.7" cy="1194.5" r="5.4"/><circle cx="1869.6" cy="1179.8" r="5.4"/><circle cx="1831.8" cy="1157.7" r="5.4"/><circle cx="1809.0" cy="1139.4" r="5.4"/><circle cx="1865.2" cy="1155.4" r="5.4"/><circle cx="1871.7" cy="1188.1" r="5.4"/><circle cx="1791.2" cy="1164.1" r="5.4"/><circle cx="1885.8" cy="1181.9" r="5.4"/><circle cx="1793.5" cy="1207.6" r="5.4"/><circle cx="1790.6" cy="1227.4" r="5.4"/><circle cx="1853.0" cy="1180.7" r="5.4"/><circle cx="1886.2" cy="1193.0" r="5.4"/><circle cx="1829.7" cy="1206.7" r="5.4"/><circle cx="1824.9" cy="1200.8" r="5.4"/><circle cx="1849.1" cy="1137.1" r="5.4"/><circle cx="1812.8" cy="1141.7" r="5.4"/><circle cx="1842.1" cy="1137.7" r="5.4"/><circle cx="1796.6" cy="1205.0" r="5.4"/><circle cx="1868.9" cy="1179.0" r="5.4"/><circle cx="1802.7" cy="1209.0" r="5.4"/><circle cx="1834.7" cy="1151.7" r="5.4"/><circle cx="1826.0" cy="1144.0" r="5.4"/><circle cx="1814.8" cy="1194.0" r="5.4"/><circle cx="1801.3" cy="1157.5" r="5.4"/><circle cx="1817.7" cy="1160.6" r="5.4"/><circle cx="1862.9" cy="1167.9" r="5.4"/><circle cx="1832.2" cy="1138.5" r="5.4"/><circle cx="1788.6" cy="1228.8" r="5.4"/><circle cx="1852.4" cy="1171.6" r="5.4"/><circle cx="1784.7" cy="1163.8" r="5.4"/><circle cx="1851.2" cy="1143.8" r="5.4"/><circle cx="1825.4" cy="1152.9" r="5.4"/><circle cx="1792.0" cy="1218.2" r="5.4"/><circle cx="1839.6" cy="1172.4" r="5.4"/><circle cx="1865.9" cy="1132.7" r="5.4"/><circle cx="1811.6" cy="1223.0" r="5.4"/><circle cx="1854.3" cy="1170.1" r="5.4"/><circle cx="1888.8" cy="1185.0" r="5.4"/><circle cx="1854.4" cy="1168.1" r="5.4"/><circle cx="1780.4" cy="1199.9" r="5.4"/><circle cx="1842.4" cy="1162.0" r="5.4"/><circle cx="1818.3" cy="1172.4" r="5.4"/><circle cx="1816.9" cy="1127.9" r="5.4"/><circle cx="1798.8" cy="1220.6" r="5.4"/><circle cx="1792.2" cy="1211.4" r="5.4"/><circle cx="1839.4" cy="1148.2" r="5.4"/><circle cx="1780.8" cy="1179.5" r="5.4"/><circle cx="1842.3" cy="1129.6" r="5.4"/><circle cx="1836.4" cy="1174.9" r="5.4"/><circle cx="1859.3" cy="1167.9" r="5.4"/><circle cx="1846.0" cy="1130.1" r="5.4"/><circle cx="1840.9" cy="1126.5" r="5.4"/><circle cx="1856.5" cy="1169.2" r="5.4"/><circle cx="1892.9" cy="1182.6" r="5.4"/><circle cx="1800.2" cy="1211.1" r="5.4"/><circle cx="1827.4" cy="1188.3" r="5.4"/><circle cx="1868.1" cy="1170.7" r="5.4"/><circle cx="1844.1" cy="1130.6" r="5.4"/><circle cx="1817.4" cy="1133.3" r="5.4"/><circle cx="1840.3" cy="1179.9" r="5.4"/><circle cx="1805.6" cy="1166.1" r="5.4"/><circle cx="1781.2" cy="1233.0" r="5.4"/><circle cx="1841.8" cy="1159.9" r="5.4"/><circle cx="1875.7" cy="1176.2" r="5.4"/><circle cx="1797.0" cy="1127.5" r="5.4"/><circle cx="1870.4" cy="1175.6" r="5.4"/><circle cx="1824.7" cy="1159.3" r="5.4"/><circle cx="1866.1" cy="1170.3" r="5.4"/><circle cx="1800.1" cy="1128.6" r="5.4"/><circle cx="1786.0" cy="1173.0" r="5.4"/><circle cx="1888.4" cy="1186.4" r="5.4"/><circle cx="1856.8" cy="1144.8" r="5.4"/><circle cx="1846.3" cy="1176.9" r="5.4"/><circle cx="1839.9" cy="1180.6" r="5.4"/><circle cx="1841.6" cy="1194.0" r="5.4"/><circle cx="1817.9" cy="1142.5" r="5.4"/><circle cx="1814.0" cy="1219.2" r="5.4"/><circle cx="1875.1" cy="1162.6" r="5.4"/><circle cx="1814.4" cy="1147.3" r="5.4"/><circle cx="1786.3" cy="1187.3" r="5.4"/><circle cx="1782.8" cy="1231.1" r="5.4"/><circle cx="1790.1" cy="1219.6" r="5.4"/><circle cx="1818.1" cy="1128.2" r="5.4"/><circle cx="1856.8" cy="1163.9" r="5.4"/><circle cx="1791.1" cy="1194.1" r="5.4"/><circle cx="1803.1" cy="1218.7" r="5.4"/><circle cx="1809.7" cy="1191.9" r="5.4"/><circle cx="1802.7" cy="1218.0" r="5.4"/><circle cx="1850.6" cy="1135.1" r="5.4"/><circle cx="1820.9" cy="1201.3" r="5.4"/><circle cx="1808.8" cy="1139.9" r="5.4"/><circle cx="1828.1" cy="1127.5" r="5.4"/><circle cx="1816.3" cy="1217.8" r="5.4"/><circle cx="1888.4" cy="1170.0" r="5.4"/><circle cx="1870.4" cy="1129.8" r="5.4"/><circle cx="1852.4" cy="1129.7" r="5.4"/><circle cx="1789.8" cy="1125.9" r="5.4"/><circle cx="1792.3" cy="1220.0" r="5.4"/><circle cx="1829.5" cy="1140.8" r="5.4"/><circle cx="1851.0" cy="1155.1" r="5.4"/><circle cx="1806.0" cy="1149.0" r="5.4"/><circle cx="1808.7" cy="1140.8" r="5.4"/><circle cx="1831.9" cy="1142.5" r="5.4"/><circle cx="1782.4" cy="1230.7" r="5.4"/><circle cx="1853.0" cy="1131.9" r="5.4"/><circle cx="1800.4" cy="1175.1" r="5.4"/><circle cx="1867.5" cy="1157.2" r="5.4"/><circle cx="1835.8" cy="1177.4" r="5.4"/><circle cx="1820.2" cy="1147.5" r="5.4"/><circle cx="1872.1" cy="1178.2" r="5.4"/><circle cx="1837.2" cy="1173.4" r="5.4"/><circle cx="1784.0" cy="1184.3" r="5.4"/><circle cx="1856.5" cy="1157.0" r="5.4"/><circle cx="1881.5" cy="1191.4" r="5.4"/><circle cx="1868.5" cy="1149.6" r="5.4"/><circle cx="1814.5" cy="1159.9" r="5.4"/><circle cx="1864.7" cy="1141.9" r="5.4"/><circle cx="1814.9" cy="1186.8" r="5.4"/><circle cx="1781.1" cy="1163.4" r="5.4"/><circle cx="1805.0" cy="1224.2" r="5.4"/><circle cx="1806.5" cy="1153.7" r="5.4"/><circle cx="1859.7" cy="1152.9" r="5.4"/><circle cx="1781.5" cy="1204.8" r="5.4"/><circle cx="1787.8" cy="1197.8" r="5.4"/><circle cx="1792.5" cy="1182.6" r="5.4"/><circle cx="1888.9" cy="1172.6" r="5.4"/><circle cx="1804.8" cy="1226.5" r="5.4"/><circle cx="1891.2" cy="1179.0" r="5.4"/><circle cx="1869.5" cy="1152.8" r="5.4"/><circle cx="1816.1" cy="1154.6" r="5.4"/><circle cx="1822.6" cy="1210.3" r="5.4"/><circle cx="1824.2" cy="1209.7" r="5.4"/><circle cx="1825.2" cy="1187.2" r="5.4"/><circle cx="1804.2" cy="1148.3" r="5.4"/><circle cx="1822.6" cy="1222.1" r="5.4"/><circle cx="1889.4" cy="1177.0" r="5.4"/><circle cx="1822.7" cy="1162.3" r="5.4"/><circle cx="1848.6" cy="1177.3" r="5.4"/><circle cx="1823.6" cy="1189.3" r="5.4"/><circle cx="1802.3" cy="1216.5" r="5.4"/><circle cx="1814.3" cy="1169.7" r="5.4"/><circle cx="1818.7" cy="1155.1" r="5.4"/><circle cx="1856.8" cy="1138.9" r="5.4"/><circle cx="1817.1" cy="1186.8" r="5.4"/><circle cx="1801.0" cy="1154.6" r="5.4"/><circle cx="1800.4" cy="1134.7" r="5.4"/><circle cx="1881.7" cy="1178.2" r="5.4"/><circle cx="1793.0" cy="1213.0" r="5.4"/><circle cx="1842.3" cy="1194.4" r="5.4"/><circle cx="1852.1" cy="1154.6" r="5.4"/><circle cx="1822.5" cy="1195.8" r="5.4"/><circle cx="1808.4" cy="1214.9" r="5.4"/><circle cx="1891.1" cy="1196.4" r="5.4"/><circle cx="1800.0" cy="1157.3" r="5.4"/><circle cx="1851.3" cy="1175.8" r="5.4"/><circle cx="1827.7" cy="1127.1" r="5.4"/><circle cx="1827.2" cy="1167.6" r="5.4"/><circle cx="1810.0" cy="1202.6" r="5.4"/><circle cx="1867.1" cy="1153.1" r="5.4"/></g>
<line x1="1127.7" y1="426.4" x2="1127.7" y2="1843.7" stroke="#000" stroke-width="3"/>
<line x1="1126.2" y1="1842.2" x2="2431.5" y2="1842.2" stroke="#111" stroke-width="3"/>
<line x1="1120.70" y1="1824.51" x2="1127.70" y2="1824.51" stroke="#111" stroke-width="2.4"/>
<line x1="1124.70" y1="1804.77" x2="1127.70" y2="1804.77" stroke="#111" stroke-width="2.4"/>
<line x1="1124.70" y1="1785.04" x2="1127.70" y2="1785.04" stroke="#111" stroke-width="2.4"/>
<line x1="1124.70" y1="1765.30" x2="1127.70" y2="1765.30" stroke="#111" stroke-width="2.4"/>
<line x1="1124.70" y1="1745.57" x2="1127.70" y2="1745.57" stroke="#111" stroke-width="2.4"/>
<line x1="1120.70" y1="1725.83" x2="1127.70" y2="1725.83" stroke="#111" stroke-width="2.4"/>
<line x1="1124.70" y1="1706.09" x2="1127.70" y2="1706.09" stroke="#111" stroke-width="2.4"/>
<line x1="1124.70" y1="1686.36" x2="1127.70" y2="1686.36" stroke="#111" stroke-width="2.4"/>
<line x1="1124.70" y1="1666.62" x2="1127.70" y2="1666.62" stroke="#111" stroke-width="2.4"/>
<line x1="1124.70" y1="1646.89" x2="1127.70" y2="1646.89" stroke="#111" stroke-width="2.4"/>
<line x1="1120.70" y1="1627.15" x2="1127.70" y2="1627.15" stroke="#111" stroke-width="2.4"/>
<line x1="1124.70" y1="1607.41" x2="1127.70" y2="1607.41" stroke="#111" stroke-width="2.4"/>
<line x1="1124.70" y1="1587.68" x2="1127.70" y2="1587.68" stroke="#111" stroke-width="2.4"/>
<line x1="1124.70" y1="1567.94" x2="1127.70" y2="1567.94" stroke="#111" stroke-width="2.4"/>
<line x1="1124.70" y1="1548.21" x2="1127.70" y2="1548.21" stroke="#111" stroke-width="2.4"/>
<line x1="1120.70" y1="1528.47" x2="1127.70" y2="1528.47" stroke="#111" stroke-width="2.4"/>
<line x1="1124.70" y1="1508.73" x2="1127.70" y2="1508.73" stroke="#111" stroke-width="2.4"/>
<line x1="1124.70" y1="1489.00" x2="1127.70" y2="1489.00" stroke="#111" stroke-width="2.4"/>
<line x1="1124.70" y1="1469.26" x2="1127.70" y2="1469.26" stroke="#111" stroke-width="2.4"/>
<line x1="1124.70" y1="1449.53" x2="1127.70" y2="1449.53" stroke="#111" stroke-width="2.4"/>
<line x1="1120.70" y1="1429.79" x2="1127.70" y2="1429.79" stroke="#111" stroke-width="2.4"/>
<line x1="1124.70" y1="1410.05" x2="1127.70" y2="1410.05" stroke="#111" stroke-width="2.4"/>
<line x1="1124.70" y1="1390.32" x2="1127.70" y2="1390.32" stroke="#111" stroke-width="2.4"/>
<line x1="1124.70" y1="1370.58" x2="1127.70" y2="1370.58" stroke="#111" stroke-width="2.4"/>
<line x1="1124.70" y1="1350.85" x2="1127.70" y2="1350.85" stroke="#111" stroke-width="2.4"/>
<line x1="1120.70" y1="1331.11" x2="1127.70" y2="1331.11" stroke="#111" stroke-width="2.4"/>
<line x1="1124.70" y1="1311.37" x2="1127.70" y2="1311.37" stroke="#111" stroke-width="2.4"/>
<line x1="1124.70" y1="1291.64" x2="1127.70" y2="1291.64" stroke="#111" stroke-width="2.4"/>
<line x1="1124.70" y1="1271.90" x2="1127.70" y2="1271.90" stroke="#111" stroke-width="2.4"/>
<line x1="1124.70" y1="1252.17" x2="1127.70" y2="1252.17" stroke="#111" stroke-width="2.4"/>
<line x1="1120.70" y1="1232.43" x2="1127.70" y2="1232.43" stroke="#111" stroke-width="2.4"/>
<line x1="1124.70" y1="1212.69" x2="1127.70" y2="1212.69" stroke="#111" stroke-width="2.4"/>
<line x1="1124.70" y1="1192.96" x2="1127.70" y2="1192.96" stroke="#111" stroke-width="2.4"/>
<line x1="1124.70" y1="1173.22" x2="1127.70" y2="1173.22" stroke="#111" stroke-width="2.4"/>
<line x1="1124.70" y1="1153.49" x2="1127.70" y2="1153.49" stroke="#111" stroke-width="2.4"/>
<line x1="1120.70" y1="1133.75" x2="1127.70" y2="1133.75" stroke="#111" stroke-width="2.4"/>
<line x1="1124.70" y1="1114.01" x2="1127.70" y2="1114.01" stroke="#111" stroke-width="2.4"/>
<line x1="1124.70" y1="1094.28" x2="1127.70" y2="1094.28" stroke="#111" stroke-width="2.4"/>
<line x1="1124.70" y1="1074.54" x2="1127.70" y2="1074.54" stroke="#111" stroke-width="2.4"/>
<line x1="1124.70" y1="1054.81" x2="1127.70" y2="1054.81" stroke="#111" stroke-width="2.4"/>
<line x1="1120.70" y1="1035.07" x2="1127.70" y2="1035.07" stroke="#111" stroke-width="2.4"/>
<line x1="1124.70" y1="1015.33" x2="1127.70" y2="1015.33" stroke="#111" stroke-width="2.4"/>
<line x1="1124.70" y1="995.60" x2="1127.70" y2="995.60" stroke="#111" stroke-width="2.4"/>
<line x1="1124.70" y1="975.86" x2="1127.70" y2="975.86" stroke="#111" stroke-width="2.4"/>
<line x1="1124.70" y1="956.13" x2="1127.70" y2="956.13" stroke="#111" stroke-width="2.4"/>
<line x1="1120.70" y1="936.39" x2="1127.70" y2="936.39" stroke="#111" stroke-width="2.4"/>
<line x1="1124.70" y1="916.65" x2="1127.70" y2="916.65" stroke="#111" stroke-width="2.4"/>
<line x1="1124.70" y1="896.92" x2="1127.70" y2="896.92" stroke="#111" stroke-width="2.4"/>
<line x1="1124.70" y1="877.18" x2="1127.70" y2="877.18" stroke="#111" stroke-width="2.4"/>
<line x1="1124.70" y1="857.45" x2="1127.70" y2="857.45" stroke="#111" stroke-width="2.4"/>
<line x1="1120.70" y1="837.71" x2="1127.70" y2="837.71" stroke="#111" stroke-width="2.4"/>
<line x1="1124.70" y1="817.97" x2="1127.70" y2="817.97" stroke="#111" stroke-width="2.4"/>
<line x1="1124.70" y1="798.24" x2="1127.70" y2="798.24" stroke="#111" stroke-width="2.4"/>
<line x1="1124.70" y1="778.50" x2="1127.70" y2="778.50" stroke="#111" stroke-width="2.4"/>
<line x1="1124.70" y1="758.77" x2="1127.70" y2="758.77" stroke="#111" stroke-width="2.4"/>
<line x1="1120.70" y1="739.03" x2="1127.70" y2="739.03" stroke="#111" stroke-width="2.4"/>
<line x1="1124.70" y1="719.29" x2="1127.70" y2="719.29" stroke="#111" stroke-width="2.4"/>
<line x1="1124.70" y1="699.56" x2="1127.70" y2="699.56" stroke="#111" stroke-width="2.4"/>
<line x1="1124.70" y1="679.82" x2="1127.70" y2="679.82" stroke="#111" stroke-width="2.4"/>
<line x1="1124.70" y1="660.09" x2="1127.70" y2="660.09" stroke="#111" stroke-width="2.4"/>
<line x1="1120.70" y1="640.35" x2="1127.70" y2="640.35" stroke="#111" stroke-width="2.4"/>
<line x1="1124.70" y1="620.61" x2="1127.70" y2="620.61" stroke="#111" stroke-width="2.4"/>
<line x1="1124.70" y1="600.88" x2="1127.70" y2="600.88" stroke="#111" stroke-width="2.4"/>
<line x1="1124.70" y1="581.14" x2="1127.70" y2="581.14" stroke="#111" stroke-width="2.4"/>
<line x1="1124.70" y1="561.41" x2="1127.70" y2="561.41" stroke="#111" stroke-width="2.4"/>
<line x1="1120.70" y1="541.67" x2="1127.70" y2="541.67" stroke="#111" stroke-width="2.4"/>
<line x1="1124.70" y1="521.93" x2="1127.70" y2="521.93" stroke="#111" stroke-width="2.4"/>
<line x1="1124.70" y1="502.20" x2="1127.70" y2="502.20" stroke="#111" stroke-width="2.4"/>
<line x1="1124.70" y1="482.46" x2="1127.70" y2="482.46" stroke="#111" stroke-width="2.4"/>
<line x1="1124.70" y1="462.73" x2="1127.70" y2="462.73" stroke="#111" stroke-width="2.4"/>
<line x1="1120.70" y1="442.99" x2="1127.70" y2="442.99" stroke="#111" stroke-width="2.4"/>
<line x1="1147.56" y1="1842.20" x2="1147.56" y2="1845.70" stroke="#111" stroke-width="2.4"/>
<line x1="1186.99" y1="1842.20" x2="1186.99" y2="1849.20" stroke="#111" stroke-width="2.4"/>
<line x1="1226.42" y1="1842.20" x2="1226.42" y2="1845.70" stroke="#111" stroke-width="2.4"/>
<line x1="1265.86" y1="1842.20" x2="1265.86" y2="1845.70" stroke="#111" stroke-width="2.4"/>
<line x1="1305.29" y1="1842.20" x2="1305.29" y2="1845.70" stroke="#111" stroke-width="2.4"/>
<line x1="1344.73" y1="1842.20" x2="1344.73" y2="1845.70" stroke="#111" stroke-width="2.4"/>
<line x1="1384.16" y1="1842.20" x2="1384.16" y2="1849.20" stroke="#111" stroke-width="2.4"/>
<line x1="1423.59" y1="1842.20" x2="1423.59" y2="1845.70" stroke="#111" stroke-width="2.4"/>
<line x1="1463.03" y1="1842.20" x2="1463.03" y2="1845.70" stroke="#111" stroke-width="2.4"/>
<line x1="1502.46" y1="1842.20" x2="1502.46" y2="1845.70" stroke="#111" stroke-width="2.4"/>
<line x1="1541.90" y1="1842.20" x2="1541.90" y2="1845.70" stroke="#111" stroke-width="2.4"/>
<line x1="1581.33" y1="1842.20" x2="1581.33" y2="1849.20" stroke="#111" stroke-width="2.4"/>
<line x1="1620.76" y1="1842.20" x2="1620.76" y2="1845.70" stroke="#111" stroke-width="2.4"/>
<line x1="1660.20" y1="1842.20" x2="1660.20" y2="1845.70" stroke="#111" stroke-width="2.4"/>
<line x1="1699.63" y1="1842.20" x2="1699.63" y2="1845.70" stroke="#111" stroke-width="2.4"/>
<line x1="1739.07" y1="1842.20" x2="1739.07" y2="1845.70" stroke="#111" stroke-width="2.4"/>
<line x1="1778.50" y1="1842.20" x2="1778.50" y2="1849.20" stroke="#111" stroke-width="2.4"/>
<line x1="1817.93" y1="1842.20" x2="1817.93" y2="1845.70" stroke="#111" stroke-width="2.4"/>
<line x1="1857.37" y1="1842.20" x2="1857.37" y2="1845.70" stroke="#111" stroke-width="2.4"/>
<line x1="1896.80" y1="1842.20" x2="1896.80" y2="1845.70" stroke="#111" stroke-width="2.4"/>
<line x1="1936.24" y1="1842.20" x2="1936.24" y2="1845.70" stroke="#111" stroke-width="2.4"/>
<line x1="1975.67" y1="1842.20" x2="1975.67" y2="1849.20" stroke="#111" stroke-width="2.4"/>
<line x1="2015.10" y1="1842.20" x2="2015.10" y2="1845.70" stroke="#111" stroke-width="2.4"/>
<line x1="2054.54" y1="1842.20" x2="2054.54" y2="1845.70" stroke="#111" stroke-width="2.4"/>
<line x1="2093.97" y1="1842.20" x2="2093.97" y2="1845.70" stroke="#111" stroke-width="2.4"/>
<line x1="2133.41" y1="1842.20" x2="2133.41" y2="1845.70" stroke="#111" stroke-width="2.4"/>
<line x1="2172.84" y1="1842.20" x2="2172.84" y2="1849.20" stroke="#111" stroke-width="2.4"/>
<line x1="2212.27" y1="1842.20" x2="2212.27" y2="1845.70" stroke="#111" stroke-width="2.4"/>
<line x1="2251.71" y1="1842.20" x2="2251.71" y2="1845.70" stroke="#111" stroke-width="2.4"/>
<line x1="2291.14" y1="1842.20" x2="2291.14" y2="1845.70" stroke="#111" stroke-width="2.4"/>
<line x1="2330.58" y1="1842.20" x2="2330.58" y2="1845.70" stroke="#111" stroke-width="2.4"/>
<line x1="2370.01" y1="1842.20" x2="2370.01" y2="1849.20" stroke="#111" stroke-width="2.4"/>
<line x1="2409.44" y1="1842.20" x2="2409.44" y2="1845.70" stroke="#111" stroke-width="2.4"/>
</svg>
<div class="t" style="left:1020.84px;top:1807.81px;font-size:28.00px;color:#333333;transform:scaleX(0.9100);-webkit-text-stroke:0.1px currentColor;">-0.0035</div>
<div class="t" style="left:1034.98px;top:1709.13px;font-size:28.00px;color:#333333;transform:scaleX(0.9100);-webkit-text-stroke:0.1px currentColor;">-0.003</div>
<div class="t" style="left:1020.84px;top:1610.45px;font-size:28.00px;color:#333333;transform:scaleX(0.9100);-webkit-text-stroke:0.1px currentColor;">-0.0025</div>
<div class="t" style="left:1035.24px;top:1511.77px;font-size:28.00px;color:#333333;transform:scaleX(0.9100);-webkit-text-stroke:0.1px currentColor;">-0.002</div>
<div class="t" style="left:1020.84px;top:1413.09px;font-size:28.00px;color:#333333;transform:scaleX(0.9100);-webkit-text-stroke:0.1px currentColor;">-0.0015</div>
<div class="t" style="left:1035.11px;top:1314.41px;font-size:28.00px;color:#333333;transform:scaleX(0.9100);-webkit-text-stroke:0.1px currentColor;">-0.001</div>
<div class="t" style="left:1020.84px;top:1215.73px;font-size:28.00px;color:#333333;transform:scaleX(0.9100);-webkit-text-stroke:0.1px currentColor;">-0.0005</div>
<div class="t" style="left:1092.95px;top:1117.05px;font-size:28.00px;color:#333333;transform:scaleX(0.9100);-webkit-text-stroke:0.1px currentColor;">0</div>
<div class="t" style="left:1029.25px;top:1018.37px;font-size:28.00px;color:#333333;transform:scaleX(0.9100);-webkit-text-stroke:0.1px currentColor;">0.0005</div>
<div class="t" style="left:1043.65px;top:919.69px;font-size:28.00px;color:#333333;transform:scaleX(0.9100);-webkit-text-stroke:0.1px currentColor;">0.001</div>
<div class="t" style="left:1029.25px;top:821.01px;font-size:28.00px;color:#333333;transform:scaleX(0.9100);-webkit-text-stroke:0.1px currentColor;">0.0015</div>
<div class="t" style="left:1043.77px;top:722.33px;font-size:28.00px;color:#333333;transform:scaleX(0.9100);-webkit-text-stroke:0.1px currentColor;">0.002</div>
<div class="t" style="left:1029.25px;top:623.65px;font-size:28.00px;color:#333333;transform:scaleX(0.9100);-webkit-text-stroke:0.1px currentColor;">0.0025</div>
<div class="t" style="left:1043.52px;top:524.97px;font-size:28.00px;color:#333333;transform:scaleX(0.9100);-webkit-text-stroke:0.1px currentColor;">0.003</div>
<div class="t" style="left:1029.25px;top:426.29px;font-size:28.00px;color:#333333;transform:scaleX(0.9100);-webkit-text-stroke:0.1px currentColor;">0.0035</div>
<div class="t" style="left:1150.81px;top:1855.80px;font-size:28.00px;color:#333333;transform:scaleX(0.9100);-webkit-text-stroke:0.1px currentColor;">-0.003</div>
<div class="t" style="left:1348.11px;top:1855.80px;font-size:28.00px;color:#333333;transform:scaleX(0.9100);-webkit-text-stroke:0.1px currentColor;">-0.002</div>
<div class="t" style="left:1545.21px;top:1855.80px;font-size:28.00px;color:#333333;transform:scaleX(0.9100);-webkit-text-stroke:0.1px currentColor;">-0.001</div>
<div class="t" style="left:1771.37px;top:1855.80px;font-size:28.00px;color:#333333;transform:scaleX(0.9100);-webkit-text-stroke:0.1px currentColor;">0</div>
<div class="t" style="left:1943.88px;top:1855.80px;font-size:28.00px;color:#333333;transform:scaleX(0.9100);-webkit-text-stroke:0.1px currentColor;">0.001</div>
<div class="t" style="left:2141.12px;top:1855.80px;font-size:28.00px;color:#333333;transform:scaleX(0.9100);-webkit-text-stroke:0.1px currentColor;">0.002</div>
<div class="t" style="left:2338.16px;top:1855.80px;font-size:28.00px;color:#333333;transform:scaleX(0.9100);-webkit-text-stroke:0.1px currentColor;">0.003</div>
</div></body></html>
